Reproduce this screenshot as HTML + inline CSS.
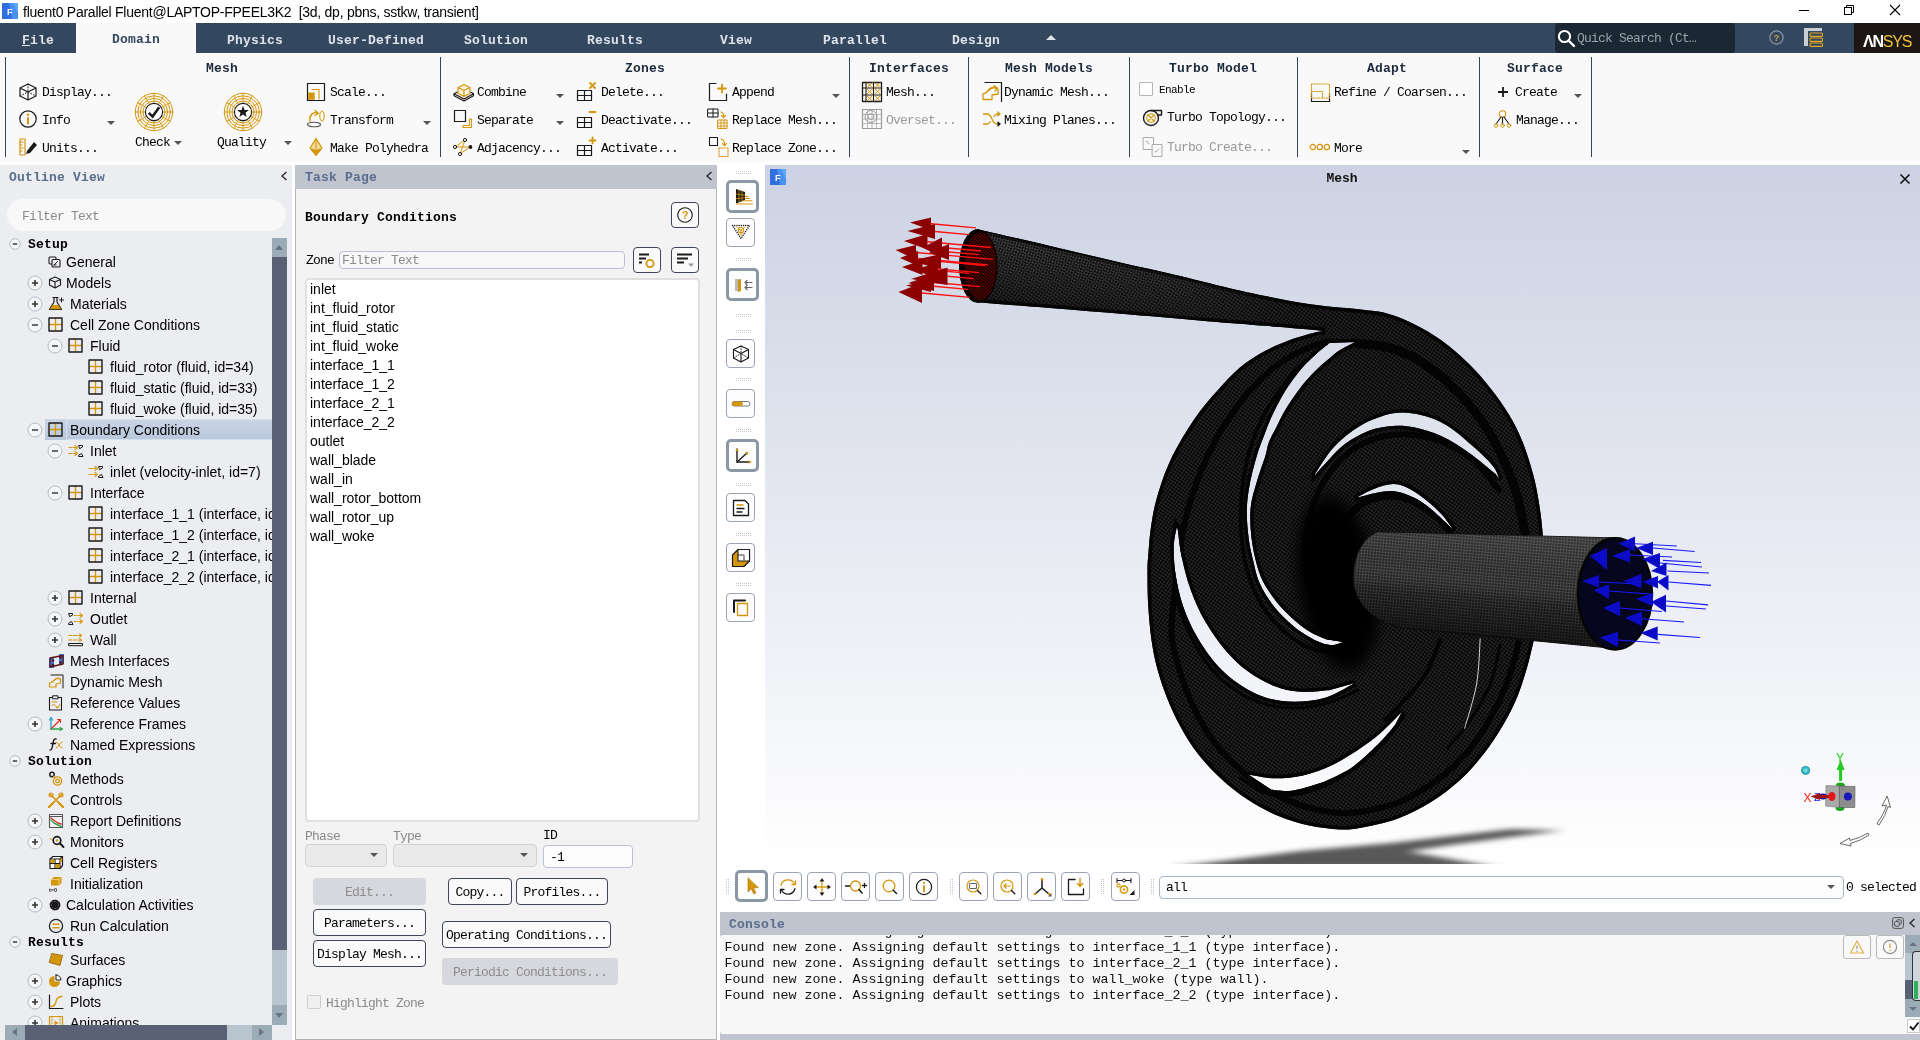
<!DOCTYPE html>
<html lang="en"><head><meta charset="utf-8"><title>fluent0 Parallel Fluent</title>
<style>
*{box-sizing:border-box;margin:0;padding:0}
html,body{width:1920px;height:1040px;overflow:hidden;background:#fff}
body{position:relative;font-family:"Liberation Mono",monospace;font-size:13px;color:#000}
.abs{position:absolute}
.mono{font-family:"Liberation Mono",monospace;font-size:13px;letter-spacing:-0.8px;white-space:pre}
.monob{font-family:"Liberation Mono",monospace;font-size:13px;font-weight:bold;letter-spacing:0.2px;white-space:pre}
.sans{font-family:"Liberation Sans",sans-serif;font-size:14px;white-space:pre}
#title{left:0;top:0;width:1920px;height:23px;background:#fff}
#title .t{left:23px;top:4px;font-family:"Liberation Sans",sans-serif;font-size:14px;letter-spacing:-0.26px;white-space:pre;line-height:17px;color:#000}
#menu{left:0;top:23px;width:1920px;height:30px;background:#33475f}
#menu .tab{position:absolute;top:0;height:30px;line-height:32px;text-align:center;color:#dfe3ea;font-family:"Liberation Mono",monospace;font-weight:bold;font-size:13px;letter-spacing:0.2px;white-space:pre;transform:translateX(-50%)}
#ribbon{left:0;top:53px;width:1920px;height:109px;background:#f9f9f9}
.vsep{position:absolute;top:4px;width:1px;height:100px;background:#34465a}
.glabel{position:absolute;top:8px;height:16px;line-height:16px;transform:translateX(-50%);color:#1b2a3a}
.ri{position:absolute;height:20px;line-height:20px}
.ri svg{position:absolute;left:0;top:0}
.ri span{position:absolute;top:0;white-space:pre}
.dd{position:absolute;width:0;height:0;border-left:4px solid transparent;border-right:4px solid transparent;border-top:4px solid #555}
.dis{color:#999}
</style></head><body>

<div id="title" class="abs">
<svg class="abs" style="left:2px;top:3px" width="16" height="16" viewBox="0 0 16 16"><rect width="16" height="16" fill="#2f6fe0"/><path d="M7 0 L12 0 L16 12 L16 16 L10 16 Z" fill="#4a90f0"/><path d="M11 0H16V11Z" fill="#5aa8ff"/><text x="5" y="12" font-family="Liberation Sans,sans-serif" font-weight="bold" font-size="9" fill="#fff">F</text></svg>
<div class="abs t">fluent0 Parallel Fluent@LAPTOP-FPEEL3K2  [3d, dp, pbns, sstkw, transient]</div>
<svg class="abs" style="left:1790px;top:0" width="130" height="23" viewBox="0 0 130 23" fill="none" stroke="#000" stroke-width="1"><path d="M9 10.5H19"/><rect x="54.5" y="7.5" width="7" height="7"/><path d="M56.5 7.5V5.5H63.5V12.5H61.5"/><path d="M100 5L110 15M110 5L100 15" stroke-width="1.1"/></svg>
</div>
<div id="menu" class="abs">
<div class="abs" style="left:76px;top:0;width:120px;height:30px;background:#f9f9f9"></div>
<div class="tab" style="left:38px;top:2px"><u>F</u>ile</div>
<div class="tab" style="left:136px;top:1px;color:#33475f">Domain</div>
<div class="tab" style="left:255px;top:2px">Physics</div>
<div class="tab" style="left:376px;top:2px">User-Defined</div>
<div class="tab" style="left:496px;top:2px">Solution</div>
<div class="tab" style="left:615px;top:2px">Results</div>
<div class="tab" style="left:736px;top:2px">View</div>
<div class="tab" style="left:855px;top:2px">Parallel</div>
<div class="tab" style="left:976px;top:2px">Design</div>
<div class="abs" style="left:1046px;top:12px;width:0;height:0;border-left:5px solid transparent;border-right:5px solid transparent;border-bottom:5px solid #dfe3ea"></div>
<div class="abs" style="left:1555px;top:0;width:180px;height:30px;background:#1b2733;border-radius:4px"></div>
<svg class="abs" style="left:1556px;top:5px" width="20" height="20" viewBox="0 0 20 20" fill="none"><circle cx="8.5" cy="8.5" r="5.6" stroke="#fff" stroke-width="2"/><path d="M12.5 12.5L18 18" stroke="#fff" stroke-width="2.4" stroke-linecap="round"/></svg>
<div class="abs mono" style="left:1577px;top:8px;color:#9aa3ad;line-height:16px">Quick Search (Ct…</div>
<svg class="abs" style="left:1768px;top:6px" width="17" height="17" viewBox="0 0 17 17" fill="none"><circle cx="8.5" cy="8.5" r="6.6" stroke="#8e99a6" stroke-width="1.2"/><text x="8.5" y="12" text-anchor="middle" font-family="Liberation Sans,sans-serif" font-weight="bold" font-size="9.5" fill="#c9a24a">?</text></svg>
<svg class="abs" style="left:1803px;top:4px" width="21" height="21" viewBox="0 0 21 21" fill="none"><rect x="1" y="1" width="18" height="3" fill="#c9ced6"/><rect x="1" y="4" width="4" height="15" fill="#c9ced6"/><rect x="7" y="6" width="12.5" height="3.4" rx="1" stroke="#e1a722" stroke-width="1.1"/><rect x="7" y="11" width="12.5" height="3.4" rx="1" stroke="#e1a722" stroke-width="1.1"/><rect x="7" y="16" width="12.5" height="3.4" rx="1" stroke="#e1a722" stroke-width="1.1"/></svg>
<div class="abs" style="left:1854px;top:0;width:66px;height:30px;background:#1c1715"></div>
<div class="abs" style="left:1863px;top:10px;font-family:'Liberation Sans',sans-serif;font-weight:bold;font-size:16px;line-height:18px;letter-spacing:-1.2px;color:#fff;white-space:pre">ΛN<span style="color:#f0c23a;font-weight:normal">SYS</span></div>
</div>
<div id="ribbon" class="abs">
<div class="vsep" style="left:5px"></div>
<div class="vsep" style="left:440px"></div>
<div class="vsep" style="left:849px"></div>
<div class="vsep" style="left:968px"></div>
<div class="vsep" style="left:1129px"></div>
<div class="vsep" style="left:1297px"></div>
<div class="vsep" style="left:1479px"></div>
<div class="vsep" style="left:1591px"></div>
<div class="glabel monob" style="left:222px">Mesh</div>
<div class="glabel monob" style="left:645px">Zones</div>
<div class="glabel monob" style="left:909px">Interfaces</div>
<div class="glabel monob" style="left:1049px">Mesh Models</div>
<div class="glabel monob" style="left:1213px">Turbo Model</div>
<div class="glabel monob" style="left:1387px">Adapt</div>
<div class="glabel monob" style="left:1535px">Surface</div>
<div class="ri mono " style="left:0;top:29px;width:0"><div class="abs" style="left:18px;top:0.0px;width:20px;height:20px"><svg width="20" height="20" viewBox="0 0 20 20" fill="none" stroke-linecap="round" stroke-linejoin="round"><path d="M10 2 L18 6 L18 14 L10 18 L2 14 L2 6 Z M2 6 L10 10 L18 6 M10 10 L10 18" stroke="#1a1a1a" stroke-width="1.2"/><path d="M10 2V10M2 14L10 10L18 14" stroke="#1a1a1a" stroke-width="1" stroke-dasharray="1 2"/></svg></div><span style="left:42px;top:1px">Display...</span></div>
<div class="ri mono " style="left:0;top:56px;width:0"><div class="abs" style="left:18px;top:0.0px;width:20px;height:20px"><svg width="20" height="20" viewBox="0 0 20 20" fill="none" stroke-linecap="round" stroke-linejoin="round"><circle cx="10" cy="10" r="8.2" stroke="#1a1a1a" stroke-width="1.2"/><path d="M10 9V14.5" stroke="#d4960a" stroke-width="2"/><circle cx="10" cy="5.8" r="1.2" fill="#d4960a"/></svg></div><span style="left:42px;top:2px">Info</span></div>
<div class="dd" style="left:107px;top:68px"></div>
<div class="ri mono " style="left:0;top:84px;width:0"><div class="abs" style="left:18px;top:0.0px;width:20px;height:20px"><svg width="20" height="20" viewBox="0 0 20 20" fill="none" stroke-linecap="round" stroke-linejoin="round"><rect x="2" y="2" width="5" height="16" stroke="#d4960a" stroke-width="1.2"/><path d="M2 5H5M2 8H4M2 11H5M2 14H4" stroke="#d4960a" stroke-width="1"/><path d="M9 14 L16 5 L19 8 L12 16 L8 17 Z" fill="#1a1a1a"/></svg></div><span style="left:42px;top:2px">Units...</span></div>
<div class="abs" style="left:134px;top:39px;width:40px;height:40px"><svg width="40" height="40" viewBox="0 0 40 40" fill="none" stroke-linecap="round" stroke-linejoin="round"><circle cx="20" cy="20" r="11" stroke="#d4960a" stroke-width="1"/><circle cx="20" cy="20" r="13.6" stroke="#d4960a" stroke-width="1"/><circle cx="20" cy="20" r="16.2" stroke="#d4960a" stroke-width="1"/><circle cx="20" cy="20" r="18.7" stroke="#d4960a" stroke-width="1"/><path d="M28.6 20.0L38.7 20.0" stroke="#d4960a" stroke-width="0.9"/><path d="M27.4 24.3L36.2 29.3" stroke="#d4960a" stroke-width="0.9"/><path d="M24.3 27.4L29.4 36.2" stroke="#d4960a" stroke-width="0.9"/><path d="M20.0 28.6L20.0 38.7" stroke="#d4960a" stroke-width="0.9"/><path d="M15.7 27.4L10.7 36.2" stroke="#d4960a" stroke-width="0.9"/><path d="M12.6 24.3L3.8 29.3" stroke="#d4960a" stroke-width="0.9"/><path d="M11.4 20.0L1.3 20.0" stroke="#d4960a" stroke-width="0.9"/><path d="M12.6 15.7L3.8 10.7" stroke="#d4960a" stroke-width="0.9"/><path d="M15.7 12.6L10.6 3.8" stroke="#d4960a" stroke-width="0.9"/><path d="M20.0 11.4L20.0 1.3" stroke="#d4960a" stroke-width="0.9"/><path d="M24.3 12.6L29.4 3.8" stroke="#d4960a" stroke-width="0.9"/><path d="M27.4 15.7L36.2 10.6" stroke="#d4960a" stroke-width="0.9"/><circle cx="20" cy="20" r="8.6" fill="#fff" stroke="#1a1a1a" stroke-width="1.1"/><path d="M14.8 20.8 L18.6 24.6 L25.2 15.2" stroke="#1a1a1a" stroke-width="2.6" stroke-linecap="butt" stroke-linejoin="miter"/></svg></div>
<div class="abs mono" style="left:135px;top:82px;line-height:16px">Check</div>
<div class="dd" style="left:174px;top:88px"></div>
<div class="abs" style="left:223px;top:39px;width:40px;height:40px"><svg width="40" height="40" viewBox="0 0 40 40" fill="none" stroke-linecap="round" stroke-linejoin="round"><circle cx="20" cy="20" r="11" stroke="#d4960a" stroke-width="1"/><circle cx="20" cy="20" r="13.6" stroke="#d4960a" stroke-width="1"/><circle cx="20" cy="20" r="16.2" stroke="#d4960a" stroke-width="1"/><circle cx="20" cy="20" r="18.7" stroke="#d4960a" stroke-width="1"/><path d="M28.6 20.0L38.7 20.0" stroke="#d4960a" stroke-width="0.9"/><path d="M27.4 24.3L36.2 29.3" stroke="#d4960a" stroke-width="0.9"/><path d="M24.3 27.4L29.4 36.2" stroke="#d4960a" stroke-width="0.9"/><path d="M20.0 28.6L20.0 38.7" stroke="#d4960a" stroke-width="0.9"/><path d="M15.7 27.4L10.7 36.2" stroke="#d4960a" stroke-width="0.9"/><path d="M12.6 24.3L3.8 29.3" stroke="#d4960a" stroke-width="0.9"/><path d="M11.4 20.0L1.3 20.0" stroke="#d4960a" stroke-width="0.9"/><path d="M12.6 15.7L3.8 10.7" stroke="#d4960a" stroke-width="0.9"/><path d="M15.7 12.6L10.6 3.8" stroke="#d4960a" stroke-width="0.9"/><path d="M20.0 11.4L20.0 1.3" stroke="#d4960a" stroke-width="0.9"/><path d="M24.3 12.6L29.4 3.8" stroke="#d4960a" stroke-width="0.9"/><path d="M27.4 15.7L36.2 10.6" stroke="#d4960a" stroke-width="0.9"/><circle cx="20" cy="20" r="8.6" fill="#fff" stroke="#1a1a1a" stroke-width="1.1"/><polygon points="20.0,13.8 21.5,17.9 25.9,18.1 22.5,20.8 23.6,25.0 20.0,22.6 16.4,25.0 17.5,20.8 14.1,18.1 18.5,17.9" fill="#1a1a1a"/></svg></div>
<div class="abs mono" style="left:217px;top:82px;line-height:16px">Quality</div>
<div class="dd" style="left:284px;top:88px"></div>
<div class="ri mono " style="left:0;top:29px;width:0"><div class="abs" style="left:306px;top:0.0px;width:20px;height:20px"><svg width="20" height="20" viewBox="0 0 20 20" fill="none" stroke-linecap="round" stroke-linejoin="round"><rect x="1.5" y="1.5" width="17" height="17" stroke="#1a1a1a" stroke-width="1.2"/><path d="M6 7.5H13V17" stroke="#d4960a" stroke-width="1.1"/><rect x="2.2" y="10.5" width="6.5" height="7.3" fill="#d4960a"/></svg></div><span style="left:330px;top:1px">Scale...</span></div>
<div class="ri mono " style="left:0;top:56px;width:0"><div class="abs" style="left:306px;top:0.0px;width:20px;height:20px"><svg width="20" height="20" viewBox="0 0 20 20" fill="none" stroke-linecap="round" stroke-linejoin="round"><ellipse cx="8" cy="15.5" rx="6.5" ry="2.3" stroke="#555" stroke-width="1.1"/><path d="M4 12 C3 6 7 3 11 4" stroke="#d4960a" stroke-width="1.5"/><path d="M9 1.5 L12.5 4.2 L8.7 6.5" stroke="#d4960a" stroke-width="1.3"/><ellipse cx="16" cy="7" rx="2.2" ry="5" stroke="#d4960a" stroke-width="1.1" stroke-dasharray="1.5 1.2"/></svg></div><span style="left:330px;top:2px">Transform</span></div>
<div class="dd" style="left:423px;top:68px"></div>
<div class="ri mono " style="left:0;top:84px;width:0"><div class="abs" style="left:306px;top:0.0px;width:20px;height:20px"><svg width="20" height="20" viewBox="0 0 20 20" fill="none" stroke-linecap="round" stroke-linejoin="round"><path d="M10 1.5 L16 11 L10 18.5 L4 11 Z" stroke="#d4960a" stroke-width="1.2" fill="#f2d79a"/><path d="M4 11 L10 13 L16 11 L10 18.5 Z" fill="#d4960a"/><path d="M10 1.5V13" stroke="#d4960a" stroke-width="1"/></svg></div><span style="left:330px;top:2px">Make Polyhedra</span></div>
<div class="ri mono " style="left:0;top:29px;width:0"><div class="abs" style="left:452px;top:0.0px;width:22px;height:20px"><svg width="22" height="20" viewBox="0 0 22 20" fill="none" stroke-linecap="round" stroke-linejoin="round"><path d="M6 5.5L12 2.5L18 5.5L12 8.5Z M6 5.5V11.5L12 14.5V8.5 M18 5.5V11.5L12 14.5" stroke="#d4960a" stroke-width="1.2" fill="#fbf1d8"/><path d="M5 10.2L2 11.8L12 17L21.5 11.8L19 10.2 M2 11.8V13.8L12 19L21.5 13.8V11.8" stroke="#1a1a1a" stroke-width="1.2"/></svg></div><span style="left:477px;top:1px">Combine</span></div>
<div class="dd" style="left:556px;top:41px"></div>
<div class="ri mono " style="left:0;top:56px;width:0"><div class="abs" style="left:453px;top:0.0px;width:20px;height:20px"><svg width="20" height="20" viewBox="0 0 20 20" fill="none" stroke-linecap="round" stroke-linejoin="round"><rect x="1.5" y="1.5" width="11" height="11" stroke="#1a1a1a" stroke-width="1.2"/><path d="M10 16.5H16.5V10H18.5V18.5H10Z" stroke="#d4960a" stroke-width="1.1"/></svg></div><span style="left:477px;top:2px">Separate</span></div>
<div class="dd" style="left:556px;top:68px"></div>
<div class="ri mono " style="left:0;top:84px;width:0"><div class="abs" style="left:452px;top:0.0px;width:22px;height:20px"><svg width="22" height="20" viewBox="0 0 22 20" fill="none" stroke-linecap="round" stroke-linejoin="round"><path d="M3 10 L18 10 M8 17 L13 3 M8 17 L18 10 M3 10 L13 3" stroke="#d4960a" stroke-width="1"/><circle cx="3" cy="10" r="1.6" stroke="#1a1a1a" fill="#fff"/><circle cx="13" cy="3" r="1.6" stroke="#1a1a1a" fill="#fff"/><circle cx="8" cy="17" r="1.6" stroke="#1a1a1a" fill="#fff"/><circle cx="18.5" cy="10" r="1.9" fill="#1a1a1a"/></svg></div><span style="left:477px;top:2px">Adjacency...</span></div>
<div class="ri mono " style="left:0;top:29px;width:0"><div class="abs" style="left:576px;top:-1.0px;width:22px;height:22px"><svg width="22" height="22" viewBox="0 0 22 22" fill="none" stroke-linecap="round" stroke-linejoin="round"><rect x="1.5" y="9.5" width="14" height="10" stroke="#1a1a1a" stroke-width="1.2"/><path d="M8.5 9.5V19.5M1.5 14.5H15.5" stroke="#1a1a1a" stroke-width="1.2"/><path d="M14 2L19 7M19 2L14 7" stroke="#d4960a" stroke-width="1.8"/></svg></div><span style="left:601px;top:1px">Delete...</span></div>
<div class="ri mono " style="left:0;top:56px;width:0"><div class="abs" style="left:576px;top:-1.0px;width:22px;height:22px"><svg width="22" height="22" viewBox="0 0 22 22" fill="none" stroke-linecap="round" stroke-linejoin="round"><rect x="1.5" y="9.5" width="14" height="10" stroke="#1a1a1a" stroke-width="1.2"/><path d="M8.5 9.5V19.5M1.5 14.5H15.5" stroke="#1a1a1a" stroke-width="1.2"/><path d="M13.5 4H19.5" stroke="#d4960a" stroke-width="1.8"/></svg></div><span style="left:601px;top:2px">Deactivate...</span></div>
<div class="ri mono " style="left:0;top:84px;width:0"><div class="abs" style="left:576px;top:-1.0px;width:22px;height:22px"><svg width="22" height="22" viewBox="0 0 22 22" fill="none" stroke-linecap="round" stroke-linejoin="round"><rect x="1.5" y="9.5" width="14" height="10" stroke="#1a1a1a" stroke-width="1.2"/><path d="M8.5 9.5V19.5M1.5 14.5H15.5" stroke="#1a1a1a" stroke-width="1.2"/><path d="M13.5 4.5H19.5M16.5 1.5V7.5" stroke="#d4960a" stroke-width="1.8"/></svg></div><span style="left:601px;top:2px">Activate...</span></div>
<div class="ri mono " style="left:0;top:29px;width:0"><div class="abs" style="left:708px;top:0.0px;width:22px;height:20px"><svg width="22" height="20" viewBox="0 0 22 20" fill="none" stroke-linecap="round" stroke-linejoin="round"><path d="M8 1.5H1.5V18.5H18.5V12" stroke="#1a1a1a" stroke-width="1.2"/><path d="M10 6.5H18M14 2.5V10.5" stroke="#d4960a" stroke-width="1.8"/></svg></div><span style="left:732px;top:1px">Append</span></div>
<div class="dd" style="left:832px;top:41px"></div>
<div class="ri mono " style="left:0;top:56px;width:0"><div class="abs" style="left:707px;top:-1.0px;width:22px;height:22px"><svg width="22" height="22" viewBox="0 0 22 22" fill="none" stroke-linecap="round" stroke-linejoin="round"><rect x="1" y="1" width="10" height="8" stroke="#1a1a1a" stroke-width="1"/><path d="M6 1V9M1 5H11" stroke="#1a1a1a" stroke-width="1"/><rect x="11" y="12" width="9" height="8.5" stroke="#d4960a" stroke-width="1"/><path d="M14 12V20.5M17 12V20.5M11 15H20M11 18H20" stroke="#d4960a" stroke-width="0.9"/><path d="M14 4 Q17 5 16.5 9 M14.5 7.5L16.5 9.5L18.5 7.5" stroke="#d4960a" stroke-width="1.1"/></svg></div><span style="left:732px;top:2px">Replace Mesh...</span></div>
<div class="ri mono " style="left:0;top:84px;width:0"><div class="abs" style="left:708px;top:-1.0px;width:22px;height:22px"><svg width="22" height="22" viewBox="0 0 22 22" fill="none" stroke-linecap="round" stroke-linejoin="round"><rect x="1.5" y="1.5" width="8" height="8" stroke="#1a1a1a" stroke-width="1.1"/><rect x="11" y="12" width="9" height="8.5" stroke="#d4960a" stroke-width="1.1" stroke-dasharray="1.5 1.3"/><path d="M13 3 Q17 4 16.5 9 M14.5 7.5L16.5 9.5L18.5 7.5" stroke="#d4960a" stroke-width="1.1"/></svg></div><span style="left:732px;top:2px">Replace Zone...</span></div>
<div class="ri mono " style="left:0;top:29px;width:0"><div class="abs" style="left:861px;top:-1.0px;width:22px;height:22px"><svg width="22" height="22" viewBox="0 0 22 22" fill="none" stroke-linecap="round" stroke-linejoin="round"><rect x="1.5" y="1.5" width="19" height="19" stroke="#1a1a1a" stroke-width="1.3"/><path d="M1.5 7H20.5M1.5 14H20.5M5 1.5V20.5M12.5 1.5V20.5" stroke="#1a1a1a" stroke-width="1.1"/><path d="M6.1 8.1L11.299999999999999 12.9M11.299999999999999 8.1L6.1 12.9" stroke="#d4960a" stroke-width="1"/><path d="M13.9 8.1L19.1 12.9M19.1 8.1L13.9 12.9" stroke="#d4960a" stroke-width="1"/><path d="M6.1 14.9L11.299999999999999 19.7M11.299999999999999 14.9L6.1 19.7" stroke="#d4960a" stroke-width="1"/><path d="M13.9 14.9L19.1 19.7M19.1 14.9L13.9 19.7" stroke="#d4960a" stroke-width="1"/><path d="M6.1 1.8000000000000003L11.299999999999999 6.6M11.299999999999999 1.8000000000000003L6.1 6.6" stroke="#d4960a" stroke-width="1"/><path d="M13.9 1.8000000000000003L19.1 6.6M19.1 1.8000000000000003L13.9 6.6" stroke="#d4960a" stroke-width="1"/></svg></div><span style="left:886px;top:1px">Mesh...</span></div>
<div class="ri mono dis" style="left:0;top:56px;width:0"><div class="abs" style="left:861px;top:-1.0px;width:22px;height:22px"><svg width="22" height="22" viewBox="0 0 22 22" fill="none" stroke-linecap="round" stroke-linejoin="round"><rect x="1.5" y="1.5" width="19" height="19" stroke="#999" stroke-width="1.2"/><path d="M1.5 6.5H20.5M1.5 11H20.5M1.5 15.5H20.5M6.5 1.5V20.5M11 1.5V20.5M15.5 1.5V20.5" stroke="#aaa" stroke-width="0.8"/><circle cx="10" cy="8.5" r="6" stroke="#999" stroke-width="1"/><circle cx="10" cy="8.5" r="3" stroke="#999" stroke-width="0.9"/></svg></div><span style="left:886px;top:2px">Overset...</span></div>
<div class="ri mono " style="left:0;top:29px;width:0"><div class="abs" style="left:981px;top:-1.0px;width:22px;height:22px"><svg width="22" height="22" viewBox="0 0 22 22" fill="none" stroke-linecap="round" stroke-linejoin="round"><path d="M4 1.5H20.5V20.5" stroke="#1a1a1a" stroke-width="1.2"/><path d="M2 18.5 L2 13 Q6 12 8 9 Q12 5 17 8 L17 13 L11 14 L11 18.5 Z" stroke="#d4960a" stroke-width="1.3"/><path d="M5 12 Q10 4 16 7 M13 4.5L16.5 7L14 10" stroke="#d4960a" stroke-width="1.2"/></svg></div><span style="left:1004px;top:1px">Dynamic Mesh...</span></div>
<div class="ri mono " style="left:0;top:56px;width:0"><div class="abs" style="left:982px;top:0.0px;width:22px;height:20px"><svg width="22" height="20" viewBox="0 0 22 20" fill="none" stroke-linecap="round" stroke-linejoin="round"><path d="M1.5 5 H5 Q8 5 10 10 Q12 15 15 15 H17 M1.5 15 H5 Q7 15 8.5 12.5 M12 7.5 Q13.5 5 15.5 5 H17" stroke="#d4960a" stroke-width="1.3"/><path d="M15.5 2L19 5L15.5 8Z" fill="#d4960a"/><path d="M15.5 12L19 15L15.5 18Z" fill="#1a1a1a"/></svg></div><span style="left:1004px;top:2px">Mixing Planes...</span></div>
<div class="abs" style="left:1139px;top:29px;width:14px;height:14px;border:1px solid #b5b5b5;background:#fff;border-radius:1px"></div>
<div class="abs" style="left:1159px;top:29px;font-size:11px;letter-spacing:-0.6px;line-height:16px;white-space:pre">Enable</div>
<div class="ri mono " style="left:0;top:54px;width:0"><div class="abs" style="left:1142px;top:-1.0px;width:22px;height:22px"><svg width="22" height="22" viewBox="0 0 22 22" fill="none" stroke-linecap="round" stroke-linejoin="round"><circle cx="9" cy="12" r="7.5" stroke="#1a1a1a" stroke-width="1.4"/><path d="M9 4.5 H19.5 V9 H15.5" stroke="#1a1a1a" stroke-width="1.4"/><circle cx="9" cy="12" r="4.3" stroke="#d4960a" stroke-width="1.1"/><path d="M6 9L12 15M12 9L6 15" stroke="#d4960a" stroke-width="1.1"/></svg></div><span style="left:1167px;top:1px">Turbo Topology...</span></div>
<div class="ri mono dis" style="left:0;top:84px;width:0"><div class="abs" style="left:1142px;top:-1.0px;width:22px;height:22px"><svg width="22" height="22" viewBox="0 0 22 22" fill="none" stroke-linecap="round" stroke-linejoin="round"><rect x="1.5" y="1.5" width="10" height="12" stroke="#aaa" stroke-width="1"/><rect x="10.5" y="8.5" width="9.5" height="12" stroke="#aaa" stroke-width="1" fill="#f9f9f9"/><path d="M4 5 Q6 5 7 8M13 16 Q15 16 17 13" stroke="#aaa" stroke-width="1"/></svg></div><span style="left:1167px;top:1px">Turbo Create...</span></div>
<div class="ri mono " style="left:0;top:29px;width:0"><div class="abs" style="left:1310px;top:-1.0px;width:22px;height:22px"><svg width="22" height="22" viewBox="0 0 22 22" fill="none" stroke-linecap="round" stroke-linejoin="round"><path d="M1.5 13V20.5H19.5V13" stroke="#1a1a1a" stroke-width="1.2"/><rect x="1.5" y="3" width="18" height="14" stroke="#d4960a" stroke-width="1.1" stroke-dasharray="1.2 1.4"/><path d="M1.5 10.5H12.5V17" stroke="#d4960a" stroke-width="1.1" stroke-dasharray="1.2 1.4"/></svg></div><span style="left:1334px;top:1px">Refine / Coarsen...</span></div>
<div class="ri mono " style="left:0;top:84px;width:0"><div class="abs" style="left:1309px;top:5.0px;width:22px;height:10px"><svg width="22" height="10" viewBox="0 0 22 10" fill="none" stroke-linecap="round" stroke-linejoin="round"><circle cx="3.8" cy="5" r="2.6" stroke="#d4960a" stroke-width="1.2"/><circle cx="10.8" cy="5" r="2.6" stroke="#d4960a" stroke-width="1.2"/><circle cx="17.8" cy="5" r="2.6" stroke="#d4960a" stroke-width="1.2"/></svg></div><span style="left:1334px;top:2px">More</span></div>
<div class="dd" style="left:1462px;top:97px"></div>
<div class="ri mono " style="left:0;top:29px;width:0"><div class="abs" style="left:1496px;top:3.0px;width:14px;height:14px"><svg width="14" height="14" viewBox="0 0 14 14" fill="none" stroke-linecap="round" stroke-linejoin="round"><path d="M2 7H12M7 2V12" stroke="#1a1a1a" stroke-width="1.8" stroke-linecap="butt"/></svg></div><span style="left:1515px;top:1px">Create</span></div>
<div class="dd" style="left:1574px;top:41px"></div>
<div class="ri mono " style="left:0;top:56px;width:0"><div class="abs" style="left:1493px;top:0.0px;width:20px;height:20px"><svg width="20" height="20" viewBox="0 0 20 20" fill="none" stroke-linecap="round" stroke-linejoin="round"><circle cx="9.5" cy="5" r="3.2" stroke="#d4960a" stroke-width="1.1"/><path d="M8 8 L3 15 M9.5 8.2V15 M11 8L16 15" stroke="#1a1a1a" stroke-width="1.1"/><circle cx="3" cy="16.5" r="1.8" stroke="#d4960a" stroke-width="1"/><circle cx="9.5" cy="16.5" r="1.8" stroke="#d4960a" stroke-width="1"/><circle cx="16" cy="16.5" r="1.8" stroke="#d4960a" stroke-width="1"/></svg></div><span style="left:1516px;top:2px">Manage...</span></div>
</div>
<div class="abs" style="left:0;top:165px;width:292px;height:875px;background:#ecedf0;overflow:hidden">
<div class="abs monob" style="left:9px;top:5px;line-height:16px;color:#5a6e8c">Outline View</div>
<svg class="abs" style="left:279px;top:5px" width="10" height="12" viewBox="0 0 10 12" fill="none"><path d="M7.5 2L3 6L7.5 10" stroke="#222" stroke-width="1.3"/></svg>
<div class="abs" style="left:7px;top:34px;width:279px;height:32px;border-radius:16px;background:#f8f8f8"></div>
<div class="abs mono" style="left:22px;top:44px;line-height:16px;color:#8a8a8a">Filter Text</div>
<div class="abs" style="left:0;top:0;width:272px;height:860px;overflow:hidden">
<div class="abs" style="left:45px;top:254px;width:227px;height:21px;background:linear-gradient(#cad5e5,#b9c7dc)"></div>
<div class="abs" style="left:66px;top:254px;width:206px;height:21px;border:1px solid #d6dfec;border-right:none"></div>
<svg class="abs" style="left:7px;top:71px" width="16" height="16" viewBox="0 0 16 16"><circle cx="8" cy="8" r="5.3" fill="#f4f5f6" stroke="#b4bbc3" stroke-width="1"/><path d="M5.8 8H10.2" stroke="#4d5258" stroke-width="1.7"/></svg>
<div class="abs monob" style="left:28px;top:72px;line-height:16px">Setup</div>
<div class="abs" style="left:48px;top:90.5px;width:13px;height:12px"><svg width="13" height="12" viewBox="0 0 13 12" fill="none" stroke-linecap="round" stroke-linejoin="round"><rect x="1" y="1" width="7" height="7" rx="1" stroke="#1a1a1a" stroke-width="1.1"/><rect x="4" y="3.5" width="8" height="7.5" rx="1" stroke="#1a1a1a" stroke-width="1.1" fill="#ecedf0"/><path d="M6 9L9.5 5.5M6 9H8" stroke="#1a1a1a" stroke-width="1"/></svg></div>
<div class="abs sans" style="left:66px;top:88px;line-height:18px">General</div>
<svg class="abs" style="left:27px;top:110px" width="16" height="16" viewBox="0 0 16 16"><circle cx="8" cy="8" r="7" fill="#f4f5f6" stroke="#b4bbc3" stroke-width="1"/><path d="M5 8H11M8 5V11" stroke="#333" stroke-width="1.6"/></svg>
<div class="abs" style="left:48px;top:111.0px;width:14px;height:13px"><svg width="14" height="13" viewBox="0 0 14 13" fill="none" stroke-linecap="round" stroke-linejoin="round"><path d="M7 1L12.5 3.5V9L7 12L1.5 9V3.5Z M1.5 3.5L7 6L12.5 3.5M7 6V12" stroke="#1a1a1a" stroke-width="1.1"/></svg></div>
<div class="abs sans" style="left:66px;top:109px;line-height:18px">Models</div>
<svg class="abs" style="left:27px;top:131px" width="16" height="16" viewBox="0 0 16 16"><circle cx="8" cy="8" r="7" fill="#f4f5f6" stroke="#b4bbc3" stroke-width="1"/><path d="M5 8H11M8 5V11" stroke="#333" stroke-width="1.6"/></svg>
<div class="abs" style="left:48px;top:131.0px;width:17px;height:15px"><svg width="17" height="15" viewBox="0 0 17 15" fill="none" stroke-linecap="round" stroke-linejoin="round"><path d="M5 1.5H10M6 1.5V6L1.5 13.5H13.5L9 6V1.5" stroke="#1a1a1a" stroke-width="1.2"/><path d="M4.6 9H10.4L13 13.2H2Z" fill="#d4960a"/><path d="M13.5 2V6M11.5 4H15.5" stroke="#1a1a1a" stroke-width="1"/></svg></div>
<div class="abs sans" style="left:70px;top:130px;line-height:18px">Materials</div>
<svg class="abs" style="left:27px;top:152px" width="16" height="16" viewBox="0 0 16 16"><circle cx="8" cy="8" r="7" fill="#f4f5f6" stroke="#b4bbc3" stroke-width="1"/><path d="M5 8H11" stroke="#4d5258" stroke-width="1.7"/></svg>
<div class="abs" style="left:48px;top:152.0px;width:15px;height:15px"><svg width="15" height="15" viewBox="0 0 15 15" fill="none" stroke-linecap="round" stroke-linejoin="round"><path d="M7.5 1.5V13.5M1.5 7.5H13.5" stroke="#d4960a" stroke-width="1.3"/><rect x="1" y="1" width="13" height="13" stroke="#1a1a1a" stroke-width="1.4"/></svg></div>
<div class="abs sans" style="left:70px;top:151px;line-height:18px">Cell Zone Conditions</div>
<svg class="abs" style="left:47px;top:173px" width="16" height="16" viewBox="0 0 16 16"><circle cx="8" cy="8" r="7" fill="#f4f5f6" stroke="#b4bbc3" stroke-width="1"/><path d="M5 8H11" stroke="#4d5258" stroke-width="1.7"/></svg>
<div class="abs" style="left:68px;top:173.0px;width:15px;height:15px"><svg width="15" height="15" viewBox="0 0 15 15" fill="none" stroke-linecap="round" stroke-linejoin="round"><path d="M7.5 1.5V13.5M1.5 7.5H13.5" stroke="#d4960a" stroke-width="1.3"/><rect x="1" y="1" width="13" height="13" stroke="#1a1a1a" stroke-width="1.4"/></svg></div>
<div class="abs sans" style="left:90px;top:172px;line-height:18px">Fluid</div>
<div class="abs" style="left:88px;top:194.0px;width:15px;height:15px"><svg width="15" height="15" viewBox="0 0 15 15" fill="none" stroke-linecap="round" stroke-linejoin="round"><path d="M7.5 1.5V13.5M1.5 7.5H13.5" stroke="#d4960a" stroke-width="1.3"/><rect x="1" y="1" width="13" height="13" stroke="#1a1a1a" stroke-width="1.4"/></svg></div>
<div class="abs sans" style="left:110px;top:193px;line-height:18px">fluid_rotor (fluid, id=34)</div>
<div class="abs" style="left:88px;top:215.0px;width:15px;height:15px"><svg width="15" height="15" viewBox="0 0 15 15" fill="none" stroke-linecap="round" stroke-linejoin="round"><path d="M7.5 1.5V13.5M1.5 7.5H13.5" stroke="#d4960a" stroke-width="1.3"/><rect x="1" y="1" width="13" height="13" stroke="#1a1a1a" stroke-width="1.4"/></svg></div>
<div class="abs sans" style="left:110px;top:214px;line-height:18px">fluid_static (fluid, id=33)</div>
<div class="abs" style="left:88px;top:236.0px;width:15px;height:15px"><svg width="15" height="15" viewBox="0 0 15 15" fill="none" stroke-linecap="round" stroke-linejoin="round"><path d="M7.5 1.5V13.5M1.5 7.5H13.5" stroke="#d4960a" stroke-width="1.3"/><rect x="1" y="1" width="13" height="13" stroke="#1a1a1a" stroke-width="1.4"/></svg></div>
<div class="abs sans" style="left:110px;top:235px;line-height:18px">fluid_woke (fluid, id=35)</div>
<svg class="abs" style="left:27px;top:257px" width="16" height="16" viewBox="0 0 16 16"><circle cx="8" cy="8" r="7" fill="#f4f5f6" stroke="#b4bbc3" stroke-width="1"/><path d="M5 8H11" stroke="#4d5258" stroke-width="1.7"/></svg>
<div class="abs" style="left:48px;top:257.0px;width:15px;height:15px"><svg width="15" height="15" viewBox="0 0 15 15" fill="none" stroke-linecap="round" stroke-linejoin="round"><path d="M7.5 1.5V13.5M1.5 7.5H13.5" stroke="#d4960a" stroke-width="1.3"/><rect x="1" y="1" width="13" height="13" stroke="#1a1a1a" stroke-width="1.4"/></svg></div>
<div class="abs sans" style="left:70px;top:256px;line-height:18px">Boundary Conditions</div>
<svg class="abs" style="left:47px;top:278px" width="16" height="16" viewBox="0 0 16 16"><circle cx="8" cy="8" r="7" fill="#f4f5f6" stroke="#b4bbc3" stroke-width="1"/><path d="M5 8H11" stroke="#4d5258" stroke-width="1.7"/></svg>
<div class="abs" style="left:68px;top:278.5px;width:16px;height:14px"><svg width="16" height="14" viewBox="0 0 16 14" fill="none" stroke-linecap="round" stroke-linejoin="round"><path d="M1 3.5H9M1 9.5H9" stroke="#d4960a" stroke-width="1.2" stroke-dasharray="2.5 1.5"/><path d="M7 1.5L9.5 3.5L7 5.5M7 7.5L9.5 9.5L7 11.5" stroke="#d4960a" stroke-width="1.1"/><path d="M11 1.5H14.5V3L12 4.5Z M11 11L13.5 9.5L15 12.5H11Z" stroke="#1a1a1a" stroke-width="1"/></svg></div>
<div class="abs sans" style="left:90px;top:277px;line-height:18px">Inlet</div>
<div class="abs" style="left:88px;top:299.5px;width:16px;height:14px"><svg width="16" height="14" viewBox="0 0 16 14" fill="none" stroke-linecap="round" stroke-linejoin="round"><path d="M1 3.5H9M1 9.5H9" stroke="#d4960a" stroke-width="1.2" stroke-dasharray="2.5 1.5"/><path d="M7 1.5L9.5 3.5L7 5.5M7 7.5L9.5 9.5L7 11.5" stroke="#d4960a" stroke-width="1.1"/><path d="M11 1.5H14.5V3L12 4.5Z M11 11L13.5 9.5L15 12.5H11Z" stroke="#1a1a1a" stroke-width="1"/></svg></div>
<div class="abs sans" style="left:110px;top:298px;line-height:18px">inlet (velocity-inlet, id=7)</div>
<svg class="abs" style="left:47px;top:320px" width="16" height="16" viewBox="0 0 16 16"><circle cx="8" cy="8" r="7" fill="#f4f5f6" stroke="#b4bbc3" stroke-width="1"/><path d="M5 8H11" stroke="#4d5258" stroke-width="1.7"/></svg>
<div class="abs" style="left:68px;top:320.0px;width:15px;height:15px"><svg width="15" height="15" viewBox="0 0 15 15" fill="none" stroke-linecap="round" stroke-linejoin="round"><path d="M7.5 1.5V13.5M1.5 7.5H13.5" stroke="#d4960a" stroke-width="1.3"/><rect x="1" y="1" width="13" height="13" stroke="#1a1a1a" stroke-width="1.4"/></svg></div>
<div class="abs sans" style="left:90px;top:319px;line-height:18px">Interface</div>
<div class="abs" style="left:88px;top:341.0px;width:15px;height:15px"><svg width="15" height="15" viewBox="0 0 15 15" fill="none" stroke-linecap="round" stroke-linejoin="round"><path d="M7.5 1.5V13.5M1.5 7.5H13.5" stroke="#d4960a" stroke-width="1.3"/><rect x="1" y="1" width="13" height="13" stroke="#1a1a1a" stroke-width="1.4"/></svg></div>
<div class="abs sans" style="left:110px;top:340px;line-height:18px">interface_1_1 (interface, id=2)</div>
<div class="abs" style="left:88px;top:362.0px;width:15px;height:15px"><svg width="15" height="15" viewBox="0 0 15 15" fill="none" stroke-linecap="round" stroke-linejoin="round"><path d="M7.5 1.5V13.5M1.5 7.5H13.5" stroke="#d4960a" stroke-width="1.3"/><rect x="1" y="1" width="13" height="13" stroke="#1a1a1a" stroke-width="1.4"/></svg></div>
<div class="abs sans" style="left:110px;top:361px;line-height:18px">interface_1_2 (interface, id=3)</div>
<div class="abs" style="left:88px;top:383.0px;width:15px;height:15px"><svg width="15" height="15" viewBox="0 0 15 15" fill="none" stroke-linecap="round" stroke-linejoin="round"><path d="M7.5 1.5V13.5M1.5 7.5H13.5" stroke="#d4960a" stroke-width="1.3"/><rect x="1" y="1" width="13" height="13" stroke="#1a1a1a" stroke-width="1.4"/></svg></div>
<div class="abs sans" style="left:110px;top:382px;line-height:18px">interface_2_1 (interface, id=4)</div>
<div class="abs" style="left:88px;top:404.0px;width:15px;height:15px"><svg width="15" height="15" viewBox="0 0 15 15" fill="none" stroke-linecap="round" stroke-linejoin="round"><path d="M7.5 1.5V13.5M1.5 7.5H13.5" stroke="#d4960a" stroke-width="1.3"/><rect x="1" y="1" width="13" height="13" stroke="#1a1a1a" stroke-width="1.4"/></svg></div>
<div class="abs sans" style="left:110px;top:403px;line-height:18px">interface_2_2 (interface, id=5)</div>
<svg class="abs" style="left:47px;top:425px" width="16" height="16" viewBox="0 0 16 16"><circle cx="8" cy="8" r="7" fill="#f4f5f6" stroke="#b4bbc3" stroke-width="1"/><path d="M5 8H11M8 5V11" stroke="#333" stroke-width="1.6"/></svg>
<div class="abs" style="left:68px;top:425.0px;width:15px;height:15px"><svg width="15" height="15" viewBox="0 0 15 15" fill="none" stroke-linecap="round" stroke-linejoin="round"><path d="M7.5 1.5V13.5M1.5 7.5H13.5" stroke="#d4960a" stroke-width="1.3"/><rect x="1" y="1" width="13" height="13" stroke="#1a1a1a" stroke-width="1.4"/></svg></div>
<div class="abs sans" style="left:90px;top:424px;line-height:18px">Internal</div>
<svg class="abs" style="left:47px;top:446px" width="16" height="16" viewBox="0 0 16 16"><circle cx="8" cy="8" r="7" fill="#f4f5f6" stroke="#b4bbc3" stroke-width="1"/><path d="M5 8H11M8 5V11" stroke="#333" stroke-width="1.6"/></svg>
<div class="abs" style="left:68px;top:446.5px;width:16px;height:14px"><svg width="16" height="14" viewBox="0 0 16 14" fill="none" stroke-linecap="round" stroke-linejoin="round"><path d="M6 3.5H14M6 9.5H14" stroke="#d4960a" stroke-width="1.2" stroke-dasharray="2.5 1.5"/><path d="M12 1.5L14.5 3.5L12 5.5M12 7.5L14.5 9.5L12 11.5" stroke="#d4960a" stroke-width="1.1"/><path d="M1 1.5H4.5V3L2 4.5Z M1 11L3.5 9.5L5 12.5H1Z" stroke="#1a1a1a" stroke-width="1"/></svg></div>
<div class="abs sans" style="left:90px;top:445px;line-height:18px">Outlet</div>
<svg class="abs" style="left:47px;top:467px" width="16" height="16" viewBox="0 0 16 16"><circle cx="8" cy="8" r="7" fill="#f4f5f6" stroke="#b4bbc3" stroke-width="1"/><path d="M5 8H11M8 5V11" stroke="#333" stroke-width="1.6"/></svg>
<div class="abs" style="left:68px;top:467.5px;width:16px;height:14px"><svg width="16" height="14" viewBox="0 0 16 14" fill="none" stroke-linecap="round" stroke-linejoin="round"><path d="M1 2.5H13M1 7H13" stroke="#d4960a" stroke-width="1.2" stroke-dasharray="3 1.5"/><path d="M11.5 0.8L14 2.5L11.5 4.2M11.5 5.3L14 7L11.5 8.7" stroke="#d4960a" stroke-width="1"/><rect x="1" y="10.5" width="13.5" height="2.2" stroke="#1a1a1a" stroke-width="1"/></svg></div>
<div class="abs sans" style="left:90px;top:466px;line-height:18px">Wall</div>
<div class="abs" style="left:48px;top:487.5px;width:17px;height:16px"><svg width="17" height="16" viewBox="0 0 17 16" fill="none" stroke-linecap="round" stroke-linejoin="round"><rect x="1" y="5" width="5" height="10" fill="#3b78d8"/><rect x="11" y="1" width="5" height="10" fill="#3b78d8"/><path d="M2 5L15 2.5V11L2 14Z" stroke="#5a1010" stroke-width="1.3"/><circle cx="5" cy="7.5" r="1.3" fill="#5a1010"/><circle cx="12.5" cy="4.5" r="1.3" fill="#5a1010"/><circle cx="5" cy="12" r="1.3" fill="#5a1010"/><circle cx="12.5" cy="9.5" r="1.3" fill="#5a1010"/></svg></div>
<div class="abs sans" style="left:70px;top:487px;line-height:18px">Mesh Interfaces</div>
<div class="abs" style="left:48px;top:509.0px;width:16px;height:15px"><svg width="16" height="15" viewBox="0 0 16 15" fill="none" stroke-linecap="round" stroke-linejoin="round"><path d="M3 1H15V14" stroke="#1a1a1a" stroke-width="1"/><path d="M1.5 13V9Q5 8 6.5 6Q9 3 12.5 5V9L8 10V13Z" stroke="#d4960a" stroke-width="1.2"/><path d="M4 8Q8 3 12 5" stroke="#d4960a" stroke-width="1"/></svg></div>
<div class="abs sans" style="left:70px;top:508px;line-height:18px">Dynamic Mesh</div>
<div class="abs" style="left:48px;top:529.5px;width:15px;height:16px"><svg width="15" height="16" viewBox="0 0 15 16" fill="none" stroke-linecap="round" stroke-linejoin="round"><rect x="1.5" y="2.5" width="12" height="12.5" stroke="#1a1a1a" stroke-width="1.1"/><rect x="5" y="0.8" width="5" height="3" fill="#ecedf0" stroke="#1a1a1a" stroke-width="1"/><path d="M4 7H9M4 10H7" stroke="#d4960a" stroke-width="1.2"/><path d="M8 11.5L9.5 13L12 9.5" stroke="#d4960a" stroke-width="1.1"/></svg></div>
<div class="abs sans" style="left:70px;top:529px;line-height:18px">Reference Values</div>
<svg class="abs" style="left:27px;top:551px" width="16" height="16" viewBox="0 0 16 16"><circle cx="8" cy="8" r="7" fill="#f4f5f6" stroke="#b4bbc3" stroke-width="1"/><path d="M5 8H11M8 5V11" stroke="#333" stroke-width="1.6"/></svg>
<div class="abs" style="left:48px;top:551.0px;width:16px;height:15px"><svg width="16" height="15" viewBox="0 0 16 15" fill="none" stroke-linecap="round" stroke-linejoin="round"><path d="M3 13V2" stroke="#1f9bd1" stroke-width="1.3"/><path d="M1.5 4L3 1.5L4.5 4" stroke="#1f9bd1" stroke-width="1.1"/><path d="M3 13L12 4" stroke="#d93025" stroke-width="1.3"/><path d="M9.5 3.5H12.5V6.5" stroke="#d93025" stroke-width="1.1"/><path d="M3 13H14" stroke="#2da44e" stroke-width="1.3"/><path d="M12 11.5L14.5 13L12 14.5" stroke="#2da44e" stroke-width="1.1"/></svg></div>
<div class="abs sans" style="left:70px;top:550px;line-height:18px">Reference Frames</div>
<div class="abs" style="left:48px;top:572.0px;width:16px;height:15px"><svg width="16" height="15" viewBox="0 0 16 15" fill="none" stroke-linecap="round" stroke-linejoin="round"><path d="M2 13Q4 13 4.5 9L5.5 4Q6 1.5 8 2M3 6.5H7.5" stroke="#1a1a1a" stroke-width="1.4"/><path d="M8 5Q9.5 5 11 8T14 11M14 5Q12.5 5 11 8T8 11" stroke="#d4960a" stroke-width="1"/></svg></div>
<div class="abs sans" style="left:70px;top:571px;line-height:18px">Named Expressions</div>
<svg class="abs" style="left:7px;top:588px" width="16" height="16" viewBox="0 0 16 16"><circle cx="8" cy="8" r="5.3" fill="#f4f5f6" stroke="#b4bbc3" stroke-width="1"/><path d="M5.8 8H10.2" stroke="#4d5258" stroke-width="1.7"/></svg>
<div class="abs monob" style="left:28px;top:589px;line-height:16px">Solution</div>
<div class="abs" style="left:48px;top:605.5px;width:16px;height:16px"><svg width="16" height="16" viewBox="0 0 16 16" fill="none" stroke-linecap="round" stroke-linejoin="round"><circle cx="4" cy="3.5" r="2.2" stroke="#1a1a1a" stroke-width="1.5"/><circle cx="9.5" cy="10" r="4.2" stroke="#d4960a" stroke-width="1.3" stroke-dasharray="2 1"/><circle cx="9.5" cy="10" r="1.8" stroke="#d4960a" stroke-width="1.3"/><path d="M5.5 5.2L7 7" stroke="#d4960a" stroke-width="1.2"/></svg></div>
<div class="abs sans" style="left:70px;top:605px;line-height:18px">Methods</div>
<div class="abs" style="left:48px;top:626.5px;width:16px;height:16px"><svg width="16" height="16" viewBox="0 0 16 16" fill="none" stroke-linecap="round" stroke-linejoin="round"><path d="M2 2L14 14M14 2L2 14" stroke="#d4960a" stroke-width="1.6"/><circle cx="3" cy="3" r="2" stroke="#d4960a" stroke-width="1.2"/><circle cx="13" cy="3" r="2" stroke="#d4960a" stroke-width="1.2"/><path d="M1 15L5 11M11 11L15 15" stroke="#d4960a" stroke-width="2.4"/></svg></div>
<div class="abs sans" style="left:70px;top:626px;line-height:18px">Controls</div>
<svg class="abs" style="left:27px;top:648px" width="16" height="16" viewBox="0 0 16 16"><circle cx="8" cy="8" r="7" fill="#f4f5f6" stroke="#b4bbc3" stroke-width="1"/><path d="M5 8H11M8 5V11" stroke="#333" stroke-width="1.6"/></svg>
<div class="abs" style="left:48px;top:647.5px;width:16px;height:16px"><svg width="16" height="16" viewBox="0 0 16 16" fill="none" stroke-linecap="round" stroke-linejoin="round"><rect x="1.5" y="1.5" width="13" height="13" stroke="#555" stroke-width="1.1" fill="#f7f2f4"/><path d="M1.5 3.5H14.5" stroke="#555" stroke-width="1"/><path d="M3 5L7 8L10 10L13 11" stroke="#d93025" stroke-width="1.4"/><path d="M3 7L6 10L10 12L13 13.5" stroke="#2da44e" stroke-width="1.4"/></svg></div>
<div class="abs sans" style="left:70px;top:647px;line-height:18px">Report Definitions</div>
<svg class="abs" style="left:27px;top:669px" width="16" height="16" viewBox="0 0 16 16"><circle cx="8" cy="8" r="7" fill="#f4f5f6" stroke="#b4bbc3" stroke-width="1"/><path d="M5 8H11M8 5V11" stroke="#333" stroke-width="1.6"/></svg>
<div class="abs" style="left:49px;top:669.5px;width:16px;height:14px"><svg width="16" height="14" viewBox="0 0 16 14" fill="none" stroke-linecap="round" stroke-linejoin="round"><circle cx="8" cy="5.5" r="3.8" stroke="#1a1a1a" stroke-width="1.7"/><path d="M10.8 8.3L14.5 12" stroke="#1a1a1a" stroke-width="2"/><circle cx="8" cy="5.5" r="1.2" fill="#d4960a"/><path d="M1 4H2.5" stroke="#d4960a" stroke-width="1"/></svg></div>
<div class="abs sans" style="left:70px;top:668px;line-height:18px">Monitors</div>
<div class="abs" style="left:48px;top:690.0px;width:16px;height:15px"><svg width="16" height="15" viewBox="0 0 16 15" fill="none" stroke-linecap="round" stroke-linejoin="round"><path d="M2 4L5 1.5H14.5V10.5L12 13.5H2Z" fill="#fff" stroke="#1a1a1a" stroke-width="1.2"/><path d="M2 4H12V13.5M12 4L14.5 1.5M7 4V13.5M2 8.5H12" stroke="#1a1a1a" stroke-width="1.1"/><rect x="2.5" y="4.5" width="4" height="3.6" fill="#d4960a"/><rect x="7.5" y="9" width="4" height="4" fill="#d4960a"/><path d="M12.4 8.5V4.5L14.2 2.5V6.5Z" fill="#d4960a"/></svg></div>
<div class="abs sans" style="left:70px;top:689px;line-height:18px">Cell Registers</div>
<div class="abs" style="left:48px;top:710.0px;width:16px;height:17px"><svg width="16" height="17" viewBox="0 0 16 17" fill="none" stroke-linecap="round" stroke-linejoin="round"><path d="M3 4.5L6 2H13.5V8L11 10.5H3Z" fill="#d4960a"/><path d="M3 4.5H11V10.5M11 4.5L13.5 2" stroke="#f3d48a" stroke-width="0.9"/><text x="1" y="16.5" font-family="Liberation Sans,sans-serif" font-size="5.5" font-weight="bold" fill="#1a1a1a">t=0</text></svg></div>
<div class="abs sans" style="left:70px;top:710px;line-height:18px">Initialization</div>
<svg class="abs" style="left:27px;top:732px" width="16" height="16" viewBox="0 0 16 16"><circle cx="8" cy="8" r="7" fill="#f4f5f6" stroke="#b4bbc3" stroke-width="1"/><path d="M5 8H11M8 5V11" stroke="#333" stroke-width="1.6"/></svg>
<div class="abs" style="left:48px;top:732.5px;width:14px;height:14px"><svg width="14" height="14" viewBox="0 0 14 14" fill="none" stroke-linecap="round" stroke-linejoin="round"><circle cx="7" cy="7" r="3.6" fill="#1a1a1a"/><circle cx="7" cy="7" r="4.4" stroke="#1a1a1a" stroke-width="2" stroke-dasharray="1.75 1.7"/></svg></div>
<div class="abs sans" style="left:66px;top:731px;line-height:18px">Calculation Activities</div>
<div class="abs" style="left:48px;top:752.5px;width:16px;height:16px"><svg width="16" height="16" viewBox="0 0 16 16" fill="none" stroke-linecap="round" stroke-linejoin="round"><circle cx="8" cy="8" r="6.6" stroke="#1a1a1a" stroke-width="1.2"/><path d="M5 6.3H11M5 9.7H11" stroke="#d4960a" stroke-width="1.6"/></svg></div>
<div class="abs sans" style="left:70px;top:752px;line-height:18px">Run Calculation</div>
<svg class="abs" style="left:7px;top:769px" width="16" height="16" viewBox="0 0 16 16"><circle cx="8" cy="8" r="5.3" fill="#f4f5f6" stroke="#b4bbc3" stroke-width="1"/><path d="M5.8 8H10.2" stroke="#4d5258" stroke-width="1.7"/></svg>
<div class="abs monob" style="left:28px;top:770px;line-height:16px">Results</div>
<div class="abs" style="left:48px;top:787.0px;width:16px;height:15px"><svg width="16" height="15" viewBox="0 0 16 15" fill="none" stroke-linecap="round" stroke-linejoin="round"><path d="M4 1.5L14.5 3.5L12 13.5L1.5 10.5Z" fill="#d4960a" stroke="#8a5f05" stroke-width="0.8"/></svg></div>
<div class="abs sans" style="left:70px;top:786px;line-height:18px">Surfaces</div>
<svg class="abs" style="left:27px;top:808px" width="16" height="16" viewBox="0 0 16 16"><circle cx="8" cy="8" r="7" fill="#f4f5f6" stroke="#b4bbc3" stroke-width="1"/><path d="M5 8H11M8 5V11" stroke="#333" stroke-width="1.6"/></svg>
<div class="abs" style="left:48px;top:808.5px;width:14px;height:14px"><svg width="14" height="14" viewBox="0 0 14 14" fill="none" stroke-linecap="round" stroke-linejoin="round"><path d="M6.5 2A5.5 5.5 0 1 0 12 7.5H6.5Z" fill="#d4960a"/><path d="M8 1V6H13A5 5 0 0 0 8 1Z" stroke="#1a1a1a" stroke-width="1" fill="#fff"/></svg></div>
<div class="abs sans" style="left:66px;top:807px;line-height:18px">Graphics</div>
<svg class="abs" style="left:27px;top:829px" width="16" height="16" viewBox="0 0 16 16"><circle cx="8" cy="8" r="7" fill="#f4f5f6" stroke="#b4bbc3" stroke-width="1"/><path d="M5 8H11M8 5V11" stroke="#333" stroke-width="1.6"/></svg>
<div class="abs" style="left:48px;top:828.5px;width:16px;height:16px"><svg width="16" height="16" viewBox="0 0 16 16" fill="none" stroke-linecap="round" stroke-linejoin="round"><path d="M1.5 1V14.5H15" stroke="#1a1a1a" stroke-width="1.2"/><path d="M3 12.5Q7 12.5 8 7.5T14 2.5" stroke="#d4960a" stroke-width="1.3"/></svg></div>
<div class="abs sans" style="left:70px;top:828px;line-height:18px">Plots</div>
<svg class="abs" style="left:27px;top:850px" width="16" height="16" viewBox="0 0 16 16"><circle cx="8" cy="8" r="7" fill="#f4f5f6" stroke="#b4bbc3" stroke-width="1"/><path d="M5 8H11M8 5V11" stroke="#333" stroke-width="1.6"/></svg>
<div class="abs" style="left:48px;top:849.5px;width:16px;height:16px"><svg width="16" height="16" viewBox="0 0 16 16" fill="none" stroke-linecap="round" stroke-linejoin="round"><rect x="1.5" y="1.5" width="13" height="13" stroke="#d4960a" stroke-width="1.2"/><path d="M4 1.5V14.5M12 1.5V14.5" stroke="#d4960a" stroke-width="1" stroke-dasharray="1.5 1.5"/><path d="M6.5 5.5L10.5 8L6.5 10.5Z" fill="#d4960a"/></svg></div>
<div class="abs sans" style="left:70px;top:849px;line-height:18px">Animations</div>
</div>
<div class="abs" style="left:272px;top:73px;width:15px;height:787px;background:#b9c5ce"></div>
<div class="abs" style="left:272px;top:73px;width:15px;height:19px;background:#9bacb6"></div>
<div class="abs" style="left:272px;top:92px;width:15px;height:693px;background:#5b6175"></div>
<div class="abs" style="left:272px;top:840px;width:15px;height:20px;background:#9bacb6"></div>
<div class="abs" style="left:275px;top:80px;width:0;height:0;border-left:4.5px solid transparent;border-right:4.5px solid transparent;border-bottom:5px solid #6b7280"></div>
<div class="abs" style="left:275px;top:848px;width:0;height:0;border-left:4.5px solid transparent;border-right:4.5px solid transparent;border-top:5px solid #6b7280"></div>
<div class="abs" style="left:5px;top:860px;width:267px;height:15px;background:#b9c5ce"></div>
<div class="abs" style="left:5px;top:860px;width:20px;height:15px;background:#9bacb6"></div>
<div class="abs" style="left:25px;top:860px;width:202px;height:15px;background:#5b6175"></div>
<div class="abs" style="left:252px;top:860px;width:20px;height:15px;background:#9bacb6"></div>
<div class="abs" style="left:12px;top:863px;width:0;height:0;border-top:4.5px solid transparent;border-bottom:4.5px solid transparent;border-right:5px solid #6b7280"></div>
<div class="abs" style="left:259px;top:863px;width:0;height:0;border-top:4.5px solid transparent;border-bottom:4.5px solid transparent;border-left:5px solid #6b7280"></div>
</div>
<div class="abs" style="left:292px;top:165px;width:3px;height:875px;background:#fff"></div>
<div class="abs" style="left:295px;top:165px;width:422px;height:875px;background:#f3f3f3;border-left:1px solid #b3b3b3;border-right:1px solid #b3b3b3;border-bottom:1px solid #b3b3b3"></div>
<div class="abs" style="left:295px;top:165px;width:422px;height:24px;background:#bfc4cf"></div>
<div class="abs monob" style="left:305px;top:169px;line-height:16px;color:#5a6e8c;margin-top:1px">Task Page</div>
<svg class="abs" style="left:704px;top:170px" width="10" height="12" viewBox="0 0 10 12" fill="none"><path d="M7.5 2L3 6L7.5 10" stroke="#222" stroke-width="1.3"/></svg>
<div class="abs monob" style="left:305px;top:209px;line-height:16px;margin-top:1px">Boundary Conditions</div>
<div class="abs" style="left:671px;top:202px;width:28px;height:26px;border:1px solid #3d4756;border-radius:4px;background:#fafafa"></div>
<svg class="abs" style="left:676px;top:206px" width="18" height="18" viewBox="0 0 18 18" fill="none"><circle cx="9" cy="9" r="7.3" stroke="#1a1a1a" stroke-width="1.1"/><text x="9" y="13" text-anchor="middle" font-family="Liberation Sans,sans-serif" font-weight="bold" font-size="11" fill="#d4960a">?</text></svg>
<div class="abs mono" style="left:306px;top:252px;line-height:16px;margin-top:1px">Zone</div>
<div class="abs" style="left:339px;top:251px;width:286px;height:18px;border:1px solid #b8c2d3;border-radius:4px;background:#f8f8f8"></div>
<div class="abs mono" style="left:342px;top:252px;line-height:16px;color:#8a8a8a;margin-top:1px">Filter Text</div>
<div class="abs" style="left:633px;top:247px;width:28px;height:26px;border:1px solid #3d4756;border-radius:4px;background:#fafafa"></div>
<div class="abs" style="left:671px;top:247px;width:28px;height:26px;border:1px solid #3d4756;border-radius:4px;background:#fafafa"></div>
<svg class="abs" style="left:637px;top:250px" width="20" height="20" viewBox="0 0 20 20" fill="none"><path d="M2 4.5H12M2 8.5H9M2 12.5H5" stroke="#1a1a1a" stroke-width="2"/><circle cx="13" cy="13.5" r="3.6" stroke="#d4960a" stroke-width="1.8"/></svg>
<svg class="abs" style="left:675px;top:250px" width="20" height="20" viewBox="0 0 20 20" fill="none"><path d="M2 4.5H17M2 8.5H13M2 12.5H9" stroke="#1a1a1a" stroke-width="2"/><path d="M13 13.5H19L16 17Z" fill="#9a9a9a"/></svg>
<div class="abs" style="left:305px;top:278px;width:395px;height:544px;border:2px solid #e0e0e0;border-radius:4px;background:#fff"></div>
<div class="abs sans" style="left:310px;top:280px;line-height:18px">inlet</div>
<div class="abs sans" style="left:310px;top:299px;line-height:18px">int_fluid_rotor</div>
<div class="abs sans" style="left:310px;top:318px;line-height:18px">int_fluid_static</div>
<div class="abs sans" style="left:310px;top:337px;line-height:18px">int_fluid_woke</div>
<div class="abs sans" style="left:310px;top:356px;line-height:18px">interface_1_1</div>
<div class="abs sans" style="left:310px;top:375px;line-height:18px">interface_1_2</div>
<div class="abs sans" style="left:310px;top:394px;line-height:18px">interface_2_1</div>
<div class="abs sans" style="left:310px;top:413px;line-height:18px">interface_2_2</div>
<div class="abs sans" style="left:310px;top:432px;line-height:18px">outlet</div>
<div class="abs sans" style="left:310px;top:451px;line-height:18px">wall_blade</div>
<div class="abs sans" style="left:310px;top:470px;line-height:18px">wall_in</div>
<div class="abs sans" style="left:310px;top:489px;line-height:18px">wall_rotor_bottom</div>
<div class="abs sans" style="left:310px;top:508px;line-height:18px">wall_rotor_up</div>
<div class="abs sans" style="left:310px;top:527px;line-height:18px">wall_woke</div>
<div class="abs mono" style="left:305px;top:828px;line-height:16px;color:#8a8a8a;margin-top:1px">Phase</div>
<div class="abs mono" style="left:393px;top:828px;line-height:16px;color:#8a8a8a;margin-top:1px">Type</div>
<div class="abs mono" style="left:543px;top:827px;line-height:16px;margin-top:1px">ID</div>
<div class="abs" style="left:305px;top:844px;width:82px;height:23px;border:1px solid #d0d2d8;border-radius:4px;background:#e9e9e9"></div>
<div class="abs" style="left:393px;top:844px;width:144px;height:23px;border:1px solid #d0d2d8;border-radius:4px;background:#e9e9e9"></div>
<div class="abs dd" style="left:370px;top:853px;border-top-color:#555"></div>
<div class="abs dd" style="left:520px;top:853px;border-top-color:#555"></div>
<div class="abs" style="left:543px;top:845px;width:90px;height:23px;border:1px solid #b8c2d3;border-radius:4px;background:#fdfdfd"></div>
<div class="abs mono" style="left:550px;top:849px;line-height:16px;margin-top:1px">-1</div>
<div class="abs mono" style="left:313px;top:878px;width:113px;height:27px;line-height:27px;text-align:center;background:#d6d8de;border-radius:4px;color:#8d8d8d"><span style="position:relative;top:1px">Edit...</span></div>
<div class="abs mono" style="left:448px;top:878px;width:64px;height:27px;line-height:25px;text-align:center;background:#fafafa;border:1px solid #3d4756;border-radius:4px;color:#000"><span style="position:relative;top:1px">Copy...</span></div>
<div class="abs mono" style="left:516px;top:878px;width:92px;height:27px;line-height:25px;text-align:center;background:#fafafa;border:1px solid #3d4756;border-radius:4px;color:#000"><span style="position:relative;top:1px">Profiles...</span></div>
<div class="abs mono" style="left:313px;top:909px;width:113px;height:27px;line-height:25px;text-align:center;background:#fafafa;border:1px solid #3d4756;border-radius:4px;color:#000"><span style="position:relative;top:1px">Parameters...</span></div>
<div class="abs mono" style="left:313px;top:940px;width:113px;height:27px;line-height:25px;text-align:center;background:#fafafa;border:1px solid #3d4756;border-radius:4px;color:#000"><span style="position:relative;top:1px">Display Mesh...</span></div>
<div class="abs mono" style="left:442px;top:921px;width:169px;height:27px;line-height:25px;text-align:center;background:#fafafa;border:1px solid #3d4756;border-radius:4px;color:#000"><span style="position:relative;top:1px">Operating Conditions...</span></div>
<div class="abs mono" style="left:442px;top:958px;width:176px;height:27px;line-height:27px;text-align:center;background:#d6d8de;border-radius:4px;color:#8d8d8d"><span style="position:relative;top:1px">Periodic Conditions...</span></div>
<div class="abs" style="left:307px;top:995px;width:14px;height:14px;border:1px solid #cfcfcf;background:#f0f0f0;border-radius:1px"></div>
<div class="abs mono" style="left:326px;top:995px;line-height:16px;color:#8a8a8a;margin-top:1px">Highlight Zone</div>
<svg class="abs" style="left:765px;top:165px" width="1155" height="699" viewBox="765 165 1155 699">
<defs><linearGradient id="bg" x1="0" y1="0" x2="0" y2="1"><stop offset="0" stop-color="#ccd2e3"/><stop offset="1" stop-color="#ffffff"/></linearGradient>
<pattern id="m1" width="3" height="3" patternUnits="userSpaceOnUse" patternTransform="rotate(35)"><rect width="3" height="3" fill="#050505"/><path d="M0 0H3M0 0V3" stroke="#4c4c4c" stroke-width="0.7"/></pattern>
<pattern id="m2" width="3" height="3" patternUnits="userSpaceOnUse" patternTransform="rotate(5)"><rect width="3" height="3" fill="#1c1c1c"/><path d="M0 0H3M0 0V3" stroke="#646464" stroke-width="0.8"/></pattern>
<filter id="bl" x="-20%" y="-100%" width="140%" height="300%"><feGaussianBlur stdDeviation="6 2.4"/></filter>
<radialGradient id="cy"><stop offset="0.1" stop-color="#7fe6ee"/><stop offset="1" stop-color="#0d98a6"/></radialGradient>
<pattern id="m3" width="2.8" height="2.8" patternUnits="userSpaceOnUse" patternTransform="rotate(12)"><path d="M0 0H2.8M0 0V2.8" stroke="#6a6a6a" stroke-width="0.7"/></pattern>
<linearGradient id="pg" gradientUnits="userSpaceOnUse" x1="1100" y1="255" x2="1090" y2="318"><stop offset="0" stop-color="#fff"/><stop offset="0.55" stop-color="#999"/><stop offset="1" stop-color="#111"/></linearGradient>
<linearGradient id="pg2" gradientUnits="userSpaceOnUse" x1="990" y1="0" x2="1300" y2="0"><stop offset="0" stop-color="#fff"/><stop offset="0.6" stop-color="#bbb"/><stop offset="1" stop-color="#000"/></linearGradient>
<mask id="pm"><rect x="960" y="200" width="380" height="160" fill="url(#pg)"/><rect x="960" y="200" width="380" height="160" fill="url(#pg2)" style="mix-blend-mode:multiply"/></mask>
<filter id="bl2" x="-50%" y="-50%" width="200%" height="200%"><feGaussianBlur stdDeviation="7"/></filter>
<linearGradient id="cg" gradientUnits="userSpaceOnUse" x1="1480" y1="533" x2="1470" y2="640"><stop offset="0" stop-color="#fff" stop-opacity="0.10"/><stop offset="0.35" stop-color="#fff" stop-opacity="0.04"/><stop offset="0.6" stop-color="#000" stop-opacity="0.15"/><stop offset="1" stop-color="#000" stop-opacity="0.6"/></linearGradient>
<pattern id="m4" width="2.4" height="2.4" patternUnits="userSpaceOnUse" patternTransform="rotate(40)"><rect width="2.4" height="2.4" fill="#080000"/><path d="M0 0H2.4M0 0V2.4" stroke="#c80000" stroke-width="0.6"/></pattern>
</defs>
<rect x="765" y="165" width="1155" height="699" fill="url(#bg)"/>
<g filter="url(#bl)"><path d="M1166 868 L1300 851 L1391 843 L1511 829 L1562 830.5 L1455 844.5 L1408 851.5 L1445 858 L1500 868 Z" fill="#585858"/></g>
<clipPath id="dk"><path d="M981.0 230.0C992.5 232.7 1027.2 240.7 1050.0 246.0C1072.8 251.3 1096.3 257.0 1118.0 262.0C1139.7 267.0 1160.2 271.3 1180.0 276.0C1199.8 280.7 1220.3 286.2 1237.0 290.0C1253.7 293.8 1266.1 296.3 1280.0 298.9C1293.9 301.5 1306.9 303.8 1320.4 305.6C1333.9 307.4 1349.6 308.2 1360.8 309.6C1372.0 311.0 1378.7 311.2 1387.7 313.7C1396.7 316.2 1405.7 319.9 1414.7 324.4C1423.7 328.9 1432.6 334.1 1441.6 340.6C1450.6 347.1 1460.4 355.6 1468.5 363.5C1476.6 371.4 1483.2 379.2 1490.0 387.7C1496.8 396.2 1503.6 405.7 1509.0 414.7C1514.4 423.7 1518.4 431.7 1522.4 441.6C1526.4 451.5 1530.3 464.0 1533.0 473.9C1535.7 483.8 1537.0 490.9 1538.6 500.8C1540.2 510.7 1541.7 520.6 1542.6 533.0C1543.5 545.4 1544.4 561.3 1544.0 575.0C1543.6 588.7 1541.8 603.6 1540.0 615.0C1538.2 626.4 1535.2 634.6 1533.1 643.3C1530.9 652.0 1529.7 658.5 1527.1 667.3C1524.5 676.1 1521.5 686.6 1517.5 696.2C1513.5 705.8 1508.7 715.4 1503.1 725.0C1497.5 734.6 1491.0 744.6 1483.8 753.8C1476.6 763.0 1468.6 772.3 1459.8 780.3C1451.0 788.3 1441.4 795.5 1431.0 801.9C1420.6 808.3 1408.5 814.5 1397.3 818.8C1386.1 823.0 1373.2 825.4 1363.7 827.2C1354.2 829.0 1349.1 829.7 1340.0 829.4C1330.9 829.1 1319.5 827.8 1309.2 825.6C1299.0 823.4 1288.8 820.3 1278.5 816.0C1268.2 811.7 1257.3 805.9 1247.7 799.6C1238.1 793.4 1229.1 786.2 1220.8 778.5C1212.5 770.8 1204.4 762.2 1197.7 753.5C1191.0 744.8 1185.5 735.8 1180.4 726.5C1175.3 717.2 1170.8 707.3 1167.0 697.7C1163.2 688.1 1159.9 678.4 1157.3 668.8C1154.7 659.2 1153.0 650.6 1151.5 640.0C1150.0 629.4 1148.9 616.7 1148.2 605.0C1147.5 593.3 1147.5 578.8 1147.5 570.0C1147.5 561.2 1148.0 559.2 1148.5 552.5C1149.0 545.8 1149.5 537.9 1150.6 530.0C1151.7 522.1 1153.0 513.3 1155.0 505.0C1157.0 496.7 1159.8 487.7 1162.5 480.0C1165.2 472.3 1168.1 465.4 1171.2 458.8C1174.4 452.1 1176.8 447.5 1181.2 440.0C1185.7 432.5 1191.9 422.3 1198.0 414.0C1204.1 405.7 1211.0 397.8 1218.0 390.0C1225.0 382.2 1232.2 374.0 1240.0 367.5C1247.8 361.0 1256.7 355.6 1265.0 351.0C1273.3 346.4 1281.7 343.1 1290.0 340.0C1298.3 336.9 1309.2 334.0 1315.0 332.5C1320.8 331.0 1323.3 331.2 1325.0 331.0L1325.0 331.0C1317.5 330.3 1298.0 328.5 1280.0 327.0C1262.0 325.5 1242.0 324.1 1217.0 322.0C1192.0 319.9 1157.8 316.8 1130.0 314.5C1102.2 312.2 1076.0 310.1 1050.0 308.0C1024.0 305.9 986.7 303.0 974.0 302.0A18 36 0 0 1 981 230ZM1329.4 343.1C1327.0 345.1 1319.5 350.9 1315.0 355.0C1310.5 359.1 1306.7 362.7 1302.5 367.5C1298.3 372.3 1293.8 378.3 1290.0 383.8C1286.2 389.2 1283.1 394.4 1280.0 400.0C1276.9 405.6 1274.0 411.5 1271.2 417.5C1268.5 423.5 1266.1 429.9 1263.8 436.2C1261.4 442.6 1259.2 447.5 1256.9 455.5C1254.6 463.5 1251.4 475.3 1249.7 484.4C1248.0 493.5 1247.0 501.2 1246.8 510.3C1246.6 519.4 1247.7 530.5 1248.8 539.1C1249.9 547.7 1251.7 554.6 1253.5 562.0C1255.3 569.4 1256.3 576.1 1259.8 583.6C1263.2 591.1 1268.4 599.5 1274.2 606.7C1280.0 613.9 1287.2 621.1 1294.4 626.9C1301.6 632.7 1311.2 638.3 1317.4 641.3C1323.6 644.3 1327.5 644.9 1331.8 645.0C1336.1 645.1 1341.5 642.4 1343.4 641.9L1326.1 639.2C1322.7 637.5 1313.1 634.2 1305.9 629.2C1298.7 624.2 1289.5 616.2 1282.8 609.0C1276.1 601.8 1269.8 593.3 1265.5 586.0C1261.2 578.7 1259.3 573.3 1256.9 565.0C1254.5 556.7 1252.3 545.9 1251.3 536.3C1250.3 526.7 1249.8 516.5 1250.7 507.4C1251.6 498.3 1254.4 490.1 1256.9 481.5C1259.4 472.9 1263.5 462.0 1265.5 455.5C1267.5 449.0 1267.0 447.2 1268.8 442.5C1270.5 437.8 1273.8 432.5 1276.2 427.5C1278.8 422.5 1281.0 417.3 1283.8 412.5C1286.5 407.7 1289.4 403.3 1292.5 398.8C1295.6 394.2 1298.8 389.6 1302.5 385.0C1306.2 380.4 1310.8 375.4 1315.0 371.2C1319.2 367.1 1323.3 363.5 1327.5 360.0C1331.7 356.5 1335.3 353.0 1340.0 350.0C1344.7 347.0 1353.0 343.2 1355.6 341.9ZM1176.7 527.4C1176.2 530.5 1174.0 538.2 1173.8 546.1C1173.6 554.0 1174.0 564.9 1175.6 575.0C1177.2 585.1 1179.8 596.6 1183.3 606.7C1186.8 616.8 1190.8 625.9 1196.3 635.5C1201.8 645.1 1209.3 656.2 1216.5 664.4C1223.7 672.6 1231.4 679.0 1239.6 684.5C1247.8 690.0 1256.4 694.6 1265.5 697.5C1274.6 700.4 1284.3 701.8 1294.4 701.8C1304.5 701.8 1316.0 700.6 1326.1 697.5C1336.2 694.4 1350.1 685.5 1354.9 683.1L1329.0 690.3C1324.2 690.5 1309.2 692.5 1300.1 691.8C1291.0 691.1 1282.8 689.4 1274.2 686.0C1265.6 682.6 1256.4 677.6 1248.2 671.6C1240.0 665.6 1232.4 658.3 1225.2 649.9C1218.0 641.5 1210.8 631.2 1205.0 621.1C1199.2 611.0 1194.4 600.0 1190.6 589.4C1186.8 578.8 1184.1 567.8 1181.9 557.7C1179.7 547.6 1178.3 533.6 1177.6 528.8ZM1315.0 473.9C1318.2 469.4 1326.3 455.1 1333.9 447.0C1341.5 438.9 1350.9 431.0 1360.8 425.4C1370.7 419.8 1383.2 415.1 1393.1 413.3C1403.0 411.5 1411.0 412.7 1420.0 414.7C1429.0 416.7 1438.0 420.0 1447.0 425.4C1456.0 430.8 1466.3 440.3 1473.9 447.0C1481.5 453.7 1488.5 460.4 1492.8 465.8C1497.1 471.2 1498.4 477.1 1499.5 479.3L1495.5 473.9C1491.0 470.3 1477.5 458.7 1468.5 452.4C1459.5 446.1 1450.6 440.3 1441.6 436.2C1432.6 432.1 1422.8 429.3 1414.7 427.6C1406.6 425.9 1400.7 425.5 1393.1 426.0C1385.5 426.5 1377.0 427.8 1368.9 430.8C1360.8 433.9 1351.8 438.9 1344.6 444.3C1337.4 449.7 1330.7 457.9 1325.8 463.1C1320.9 468.3 1316.8 473.3 1315.0 475.3ZM1358.1 496.8C1360.8 495.4 1368.5 490.8 1374.3 488.7C1380.1 486.6 1387.3 484.1 1393.1 484.1C1398.9 484.1 1403.9 486.1 1409.3 488.7C1414.7 491.3 1420.0 495.2 1425.4 499.5C1430.8 503.8 1436.9 509.1 1441.6 514.3C1446.3 519.5 1451.7 527.8 1453.7 530.5L1447.0 523.7C1444.3 521.2 1436.2 513.2 1430.8 508.9C1425.4 504.6 1420.5 501.0 1414.7 498.1C1408.9 495.2 1402.1 492.3 1395.8 491.4C1389.5 490.5 1383.3 491.8 1377.0 492.8C1370.7 493.8 1361.2 496.8 1358.1 497.6ZM1248.2 774.5C1252.5 775.1 1265.1 778.1 1274.2 778.3C1283.3 778.4 1293.4 777.6 1303.0 775.4C1312.6 773.2 1322.2 769.9 1331.8 765.3C1341.4 760.7 1352.7 753.3 1360.7 748.0C1368.7 742.7 1373.1 739.6 1380.0 733.6C1386.9 727.6 1398.3 715.4 1402.0 711.8L1395.0 725.0C1392.5 727.9 1386.8 735.4 1380.0 742.2C1373.2 749.0 1362.3 759.8 1354.0 765.9C1345.7 772.0 1336.1 776.0 1330.0 779.0C1323.9 782.0 1323.8 782.0 1317.4 784.0C1311.0 786.0 1299.2 789.7 1291.5 790.7C1283.8 791.7 1274.7 789.9 1271.3 789.8Z" clip-rule="evenodd"/></clipPath>
<path d="M981.0 230.0C992.5 232.7 1027.2 240.7 1050.0 246.0C1072.8 251.3 1096.3 257.0 1118.0 262.0C1139.7 267.0 1160.2 271.3 1180.0 276.0C1199.8 280.7 1220.3 286.2 1237.0 290.0C1253.7 293.8 1266.1 296.3 1280.0 298.9C1293.9 301.5 1306.9 303.8 1320.4 305.6C1333.9 307.4 1349.6 308.2 1360.8 309.6C1372.0 311.0 1378.7 311.2 1387.7 313.7C1396.7 316.2 1405.7 319.9 1414.7 324.4C1423.7 328.9 1432.6 334.1 1441.6 340.6C1450.6 347.1 1460.4 355.6 1468.5 363.5C1476.6 371.4 1483.2 379.2 1490.0 387.7C1496.8 396.2 1503.6 405.7 1509.0 414.7C1514.4 423.7 1518.4 431.7 1522.4 441.6C1526.4 451.5 1530.3 464.0 1533.0 473.9C1535.7 483.8 1537.0 490.9 1538.6 500.8C1540.2 510.7 1541.7 520.6 1542.6 533.0C1543.5 545.4 1544.4 561.3 1544.0 575.0C1543.6 588.7 1541.8 603.6 1540.0 615.0C1538.2 626.4 1535.2 634.6 1533.1 643.3C1530.9 652.0 1529.7 658.5 1527.1 667.3C1524.5 676.1 1521.5 686.6 1517.5 696.2C1513.5 705.8 1508.7 715.4 1503.1 725.0C1497.5 734.6 1491.0 744.6 1483.8 753.8C1476.6 763.0 1468.6 772.3 1459.8 780.3C1451.0 788.3 1441.4 795.5 1431.0 801.9C1420.6 808.3 1408.5 814.5 1397.3 818.8C1386.1 823.0 1373.2 825.4 1363.7 827.2C1354.2 829.0 1349.1 829.7 1340.0 829.4C1330.9 829.1 1319.5 827.8 1309.2 825.6C1299.0 823.4 1288.8 820.3 1278.5 816.0C1268.2 811.7 1257.3 805.9 1247.7 799.6C1238.1 793.4 1229.1 786.2 1220.8 778.5C1212.5 770.8 1204.4 762.2 1197.7 753.5C1191.0 744.8 1185.5 735.8 1180.4 726.5C1175.3 717.2 1170.8 707.3 1167.0 697.7C1163.2 688.1 1159.9 678.4 1157.3 668.8C1154.7 659.2 1153.0 650.6 1151.5 640.0C1150.0 629.4 1148.9 616.7 1148.2 605.0C1147.5 593.3 1147.5 578.8 1147.5 570.0C1147.5 561.2 1148.0 559.2 1148.5 552.5C1149.0 545.8 1149.5 537.9 1150.6 530.0C1151.7 522.1 1153.0 513.3 1155.0 505.0C1157.0 496.7 1159.8 487.7 1162.5 480.0C1165.2 472.3 1168.1 465.4 1171.2 458.8C1174.4 452.1 1176.8 447.5 1181.2 440.0C1185.7 432.5 1191.9 422.3 1198.0 414.0C1204.1 405.7 1211.0 397.8 1218.0 390.0C1225.0 382.2 1232.2 374.0 1240.0 367.5C1247.8 361.0 1256.7 355.6 1265.0 351.0C1273.3 346.4 1281.7 343.1 1290.0 340.0C1298.3 336.9 1309.2 334.0 1315.0 332.5C1320.8 331.0 1323.3 331.2 1325.0 331.0L1325.0 331.0C1317.5 330.3 1298.0 328.5 1280.0 327.0C1262.0 325.5 1242.0 324.1 1217.0 322.0C1192.0 319.9 1157.8 316.8 1130.0 314.5C1102.2 312.2 1076.0 310.1 1050.0 308.0C1024.0 305.9 986.7 303.0 974.0 302.0A18 36 0 0 1 981 230ZM1329.4 343.1C1327.0 345.1 1319.5 350.9 1315.0 355.0C1310.5 359.1 1306.7 362.7 1302.5 367.5C1298.3 372.3 1293.8 378.3 1290.0 383.8C1286.2 389.2 1283.1 394.4 1280.0 400.0C1276.9 405.6 1274.0 411.5 1271.2 417.5C1268.5 423.5 1266.1 429.9 1263.8 436.2C1261.4 442.6 1259.2 447.5 1256.9 455.5C1254.6 463.5 1251.4 475.3 1249.7 484.4C1248.0 493.5 1247.0 501.2 1246.8 510.3C1246.6 519.4 1247.7 530.5 1248.8 539.1C1249.9 547.7 1251.7 554.6 1253.5 562.0C1255.3 569.4 1256.3 576.1 1259.8 583.6C1263.2 591.1 1268.4 599.5 1274.2 606.7C1280.0 613.9 1287.2 621.1 1294.4 626.9C1301.6 632.7 1311.2 638.3 1317.4 641.3C1323.6 644.3 1327.5 644.9 1331.8 645.0C1336.1 645.1 1341.5 642.4 1343.4 641.9L1326.1 639.2C1322.7 637.5 1313.1 634.2 1305.9 629.2C1298.7 624.2 1289.5 616.2 1282.8 609.0C1276.1 601.8 1269.8 593.3 1265.5 586.0C1261.2 578.7 1259.3 573.3 1256.9 565.0C1254.5 556.7 1252.3 545.9 1251.3 536.3C1250.3 526.7 1249.8 516.5 1250.7 507.4C1251.6 498.3 1254.4 490.1 1256.9 481.5C1259.4 472.9 1263.5 462.0 1265.5 455.5C1267.5 449.0 1267.0 447.2 1268.8 442.5C1270.5 437.8 1273.8 432.5 1276.2 427.5C1278.8 422.5 1281.0 417.3 1283.8 412.5C1286.5 407.7 1289.4 403.3 1292.5 398.8C1295.6 394.2 1298.8 389.6 1302.5 385.0C1306.2 380.4 1310.8 375.4 1315.0 371.2C1319.2 367.1 1323.3 363.5 1327.5 360.0C1331.7 356.5 1335.3 353.0 1340.0 350.0C1344.7 347.0 1353.0 343.2 1355.6 341.9ZM1176.7 527.4C1176.2 530.5 1174.0 538.2 1173.8 546.1C1173.6 554.0 1174.0 564.9 1175.6 575.0C1177.2 585.1 1179.8 596.6 1183.3 606.7C1186.8 616.8 1190.8 625.9 1196.3 635.5C1201.8 645.1 1209.3 656.2 1216.5 664.4C1223.7 672.6 1231.4 679.0 1239.6 684.5C1247.8 690.0 1256.4 694.6 1265.5 697.5C1274.6 700.4 1284.3 701.8 1294.4 701.8C1304.5 701.8 1316.0 700.6 1326.1 697.5C1336.2 694.4 1350.1 685.5 1354.9 683.1L1329.0 690.3C1324.2 690.5 1309.2 692.5 1300.1 691.8C1291.0 691.1 1282.8 689.4 1274.2 686.0C1265.6 682.6 1256.4 677.6 1248.2 671.6C1240.0 665.6 1232.4 658.3 1225.2 649.9C1218.0 641.5 1210.8 631.2 1205.0 621.1C1199.2 611.0 1194.4 600.0 1190.6 589.4C1186.8 578.8 1184.1 567.8 1181.9 557.7C1179.7 547.6 1178.3 533.6 1177.6 528.8ZM1315.0 473.9C1318.2 469.4 1326.3 455.1 1333.9 447.0C1341.5 438.9 1350.9 431.0 1360.8 425.4C1370.7 419.8 1383.2 415.1 1393.1 413.3C1403.0 411.5 1411.0 412.7 1420.0 414.7C1429.0 416.7 1438.0 420.0 1447.0 425.4C1456.0 430.8 1466.3 440.3 1473.9 447.0C1481.5 453.7 1488.5 460.4 1492.8 465.8C1497.1 471.2 1498.4 477.1 1499.5 479.3L1495.5 473.9C1491.0 470.3 1477.5 458.7 1468.5 452.4C1459.5 446.1 1450.6 440.3 1441.6 436.2C1432.6 432.1 1422.8 429.3 1414.7 427.6C1406.6 425.9 1400.7 425.5 1393.1 426.0C1385.5 426.5 1377.0 427.8 1368.9 430.8C1360.8 433.9 1351.8 438.9 1344.6 444.3C1337.4 449.7 1330.7 457.9 1325.8 463.1C1320.9 468.3 1316.8 473.3 1315.0 475.3ZM1358.1 496.8C1360.8 495.4 1368.5 490.8 1374.3 488.7C1380.1 486.6 1387.3 484.1 1393.1 484.1C1398.9 484.1 1403.9 486.1 1409.3 488.7C1414.7 491.3 1420.0 495.2 1425.4 499.5C1430.8 503.8 1436.9 509.1 1441.6 514.3C1446.3 519.5 1451.7 527.8 1453.7 530.5L1447.0 523.7C1444.3 521.2 1436.2 513.2 1430.8 508.9C1425.4 504.6 1420.5 501.0 1414.7 498.1C1408.9 495.2 1402.1 492.3 1395.8 491.4C1389.5 490.5 1383.3 491.8 1377.0 492.8C1370.7 493.8 1361.2 496.8 1358.1 497.6ZM1248.2 774.5C1252.5 775.1 1265.1 778.1 1274.2 778.3C1283.3 778.4 1293.4 777.6 1303.0 775.4C1312.6 773.2 1322.2 769.9 1331.8 765.3C1341.4 760.7 1352.7 753.3 1360.7 748.0C1368.7 742.7 1373.1 739.6 1380.0 733.6C1386.9 727.6 1398.3 715.4 1402.0 711.8L1395.0 725.0C1392.5 727.9 1386.8 735.4 1380.0 742.2C1373.2 749.0 1362.3 759.8 1354.0 765.9C1345.7 772.0 1336.1 776.0 1330.0 779.0C1323.9 782.0 1323.8 782.0 1317.4 784.0C1311.0 786.0 1299.2 789.7 1291.5 790.7C1283.8 791.7 1274.7 789.9 1271.3 789.8Z" fill="url(#m1)" fill-rule="evenodd"/>
<g clip-path="url(#dk)" fill="none" stroke="#040404" stroke-linecap="round">
<path d="M981.0 230.0C992.5 232.7 1027.2 240.7 1050.0 246.0C1072.8 251.3 1096.3 257.0 1118.0 262.0C1139.7 267.0 1160.2 271.3 1180.0 276.0C1199.8 280.7 1220.3 286.2 1237.0 290.0C1253.7 293.8 1266.1 296.3 1280.0 298.9C1293.9 301.5 1306.9 303.8 1320.4 305.6C1333.9 307.4 1349.6 308.2 1360.8 309.6C1372.0 311.0 1378.7 311.2 1387.7 313.7C1396.7 316.2 1405.7 319.9 1414.7 324.4C1423.7 328.9 1432.6 334.1 1441.6 340.6C1450.6 347.1 1460.4 355.6 1468.5 363.5C1476.6 371.4 1483.2 379.2 1490.0 387.7C1496.8 396.2 1503.6 405.7 1509.0 414.7C1514.4 423.7 1518.4 431.7 1522.4 441.6C1526.4 451.5 1530.3 464.0 1533.0 473.9C1535.7 483.8 1537.0 490.9 1538.6 500.8C1540.2 510.7 1541.7 520.6 1542.6 533.0C1543.5 545.4 1544.4 561.3 1544.0 575.0C1543.6 588.7 1541.8 603.6 1540.0 615.0C1538.2 626.4 1535.2 634.6 1533.1 643.3C1530.9 652.0 1529.7 658.5 1527.1 667.3C1524.5 676.1 1521.5 686.6 1517.5 696.2C1513.5 705.8 1508.7 715.4 1503.1 725.0C1497.5 734.6 1491.0 744.6 1483.8 753.8C1476.6 763.0 1468.6 772.3 1459.8 780.3C1451.0 788.3 1441.4 795.5 1431.0 801.9C1420.6 808.3 1408.5 814.5 1397.3 818.8C1386.1 823.0 1373.2 825.4 1363.7 827.2C1354.2 829.0 1349.1 829.7 1340.0 829.4C1330.9 829.1 1319.5 827.8 1309.2 825.6C1299.0 823.4 1288.8 820.3 1278.5 816.0C1268.2 811.7 1257.3 805.9 1247.7 799.6C1238.1 793.4 1229.1 786.2 1220.8 778.5C1212.5 770.8 1204.4 762.2 1197.7 753.5C1191.0 744.8 1185.5 735.8 1180.4 726.5C1175.3 717.2 1170.8 707.3 1167.0 697.7C1163.2 688.1 1159.9 678.4 1157.3 668.8C1154.7 659.2 1153.0 650.6 1151.5 640.0C1150.0 629.4 1148.9 616.7 1148.2 605.0C1147.5 593.3 1147.5 578.8 1147.5 570.0C1147.5 561.2 1148.0 559.2 1148.5 552.5C1149.0 545.8 1149.5 537.9 1150.6 530.0C1151.7 522.1 1153.0 513.3 1155.0 505.0C1157.0 496.7 1159.8 487.7 1162.5 480.0C1165.2 472.3 1168.1 465.4 1171.2 458.8C1174.4 452.1 1176.8 447.5 1181.2 440.0C1185.7 432.5 1191.9 422.3 1198.0 414.0C1204.1 405.7 1211.0 397.8 1218.0 390.0C1225.0 382.2 1232.2 374.0 1240.0 367.5C1247.8 361.0 1256.7 355.6 1265.0 351.0C1273.3 346.4 1281.7 343.1 1290.0 340.0C1298.3 336.9 1309.2 334.0 1315.0 332.5C1320.8 331.0 1323.3 331.2 1325.0 331.0L1325.0 331.0C1317.5 330.3 1298.0 328.5 1280.0 327.0C1262.0 325.5 1242.0 324.1 1217.0 322.0C1192.0 319.9 1157.8 316.8 1130.0 314.5C1102.2 312.2 1076.0 310.1 1050.0 308.0C1024.0 305.9 986.7 303.0 974.0 302.0A18 36 0 0 1 981 230ZM1329.4 343.1C1327.0 345.1 1319.5 350.9 1315.0 355.0C1310.5 359.1 1306.7 362.7 1302.5 367.5C1298.3 372.3 1293.8 378.3 1290.0 383.8C1286.2 389.2 1283.1 394.4 1280.0 400.0C1276.9 405.6 1274.0 411.5 1271.2 417.5C1268.5 423.5 1266.1 429.9 1263.8 436.2C1261.4 442.6 1259.2 447.5 1256.9 455.5C1254.6 463.5 1251.4 475.3 1249.7 484.4C1248.0 493.5 1247.0 501.2 1246.8 510.3C1246.6 519.4 1247.7 530.5 1248.8 539.1C1249.9 547.7 1251.7 554.6 1253.5 562.0C1255.3 569.4 1256.3 576.1 1259.8 583.6C1263.2 591.1 1268.4 599.5 1274.2 606.7C1280.0 613.9 1287.2 621.1 1294.4 626.9C1301.6 632.7 1311.2 638.3 1317.4 641.3C1323.6 644.3 1327.5 644.9 1331.8 645.0C1336.1 645.1 1341.5 642.4 1343.4 641.9L1326.1 639.2C1322.7 637.5 1313.1 634.2 1305.9 629.2C1298.7 624.2 1289.5 616.2 1282.8 609.0C1276.1 601.8 1269.8 593.3 1265.5 586.0C1261.2 578.7 1259.3 573.3 1256.9 565.0C1254.5 556.7 1252.3 545.9 1251.3 536.3C1250.3 526.7 1249.8 516.5 1250.7 507.4C1251.6 498.3 1254.4 490.1 1256.9 481.5C1259.4 472.9 1263.5 462.0 1265.5 455.5C1267.5 449.0 1267.0 447.2 1268.8 442.5C1270.5 437.8 1273.8 432.5 1276.2 427.5C1278.8 422.5 1281.0 417.3 1283.8 412.5C1286.5 407.7 1289.4 403.3 1292.5 398.8C1295.6 394.2 1298.8 389.6 1302.5 385.0C1306.2 380.4 1310.8 375.4 1315.0 371.2C1319.2 367.1 1323.3 363.5 1327.5 360.0C1331.7 356.5 1335.3 353.0 1340.0 350.0C1344.7 347.0 1353.0 343.2 1355.6 341.9ZM1176.7 527.4C1176.2 530.5 1174.0 538.2 1173.8 546.1C1173.6 554.0 1174.0 564.9 1175.6 575.0C1177.2 585.1 1179.8 596.6 1183.3 606.7C1186.8 616.8 1190.8 625.9 1196.3 635.5C1201.8 645.1 1209.3 656.2 1216.5 664.4C1223.7 672.6 1231.4 679.0 1239.6 684.5C1247.8 690.0 1256.4 694.6 1265.5 697.5C1274.6 700.4 1284.3 701.8 1294.4 701.8C1304.5 701.8 1316.0 700.6 1326.1 697.5C1336.2 694.4 1350.1 685.5 1354.9 683.1L1329.0 690.3C1324.2 690.5 1309.2 692.5 1300.1 691.8C1291.0 691.1 1282.8 689.4 1274.2 686.0C1265.6 682.6 1256.4 677.6 1248.2 671.6C1240.0 665.6 1232.4 658.3 1225.2 649.9C1218.0 641.5 1210.8 631.2 1205.0 621.1C1199.2 611.0 1194.4 600.0 1190.6 589.4C1186.8 578.8 1184.1 567.8 1181.9 557.7C1179.7 547.6 1178.3 533.6 1177.6 528.8ZM1315.0 473.9C1318.2 469.4 1326.3 455.1 1333.9 447.0C1341.5 438.9 1350.9 431.0 1360.8 425.4C1370.7 419.8 1383.2 415.1 1393.1 413.3C1403.0 411.5 1411.0 412.7 1420.0 414.7C1429.0 416.7 1438.0 420.0 1447.0 425.4C1456.0 430.8 1466.3 440.3 1473.9 447.0C1481.5 453.7 1488.5 460.4 1492.8 465.8C1497.1 471.2 1498.4 477.1 1499.5 479.3L1495.5 473.9C1491.0 470.3 1477.5 458.7 1468.5 452.4C1459.5 446.1 1450.6 440.3 1441.6 436.2C1432.6 432.1 1422.8 429.3 1414.7 427.6C1406.6 425.9 1400.7 425.5 1393.1 426.0C1385.5 426.5 1377.0 427.8 1368.9 430.8C1360.8 433.9 1351.8 438.9 1344.6 444.3C1337.4 449.7 1330.7 457.9 1325.8 463.1C1320.9 468.3 1316.8 473.3 1315.0 475.3ZM1358.1 496.8C1360.8 495.4 1368.5 490.8 1374.3 488.7C1380.1 486.6 1387.3 484.1 1393.1 484.1C1398.9 484.1 1403.9 486.1 1409.3 488.7C1414.7 491.3 1420.0 495.2 1425.4 499.5C1430.8 503.8 1436.9 509.1 1441.6 514.3C1446.3 519.5 1451.7 527.8 1453.7 530.5L1447.0 523.7C1444.3 521.2 1436.2 513.2 1430.8 508.9C1425.4 504.6 1420.5 501.0 1414.7 498.1C1408.9 495.2 1402.1 492.3 1395.8 491.4C1389.5 490.5 1383.3 491.8 1377.0 492.8C1370.7 493.8 1361.2 496.8 1358.1 497.6ZM1248.2 774.5C1252.5 775.1 1265.1 778.1 1274.2 778.3C1283.3 778.4 1293.4 777.6 1303.0 775.4C1312.6 773.2 1322.2 769.9 1331.8 765.3C1341.4 760.7 1352.7 753.3 1360.7 748.0C1368.7 742.7 1373.1 739.6 1380.0 733.6C1386.9 727.6 1398.3 715.4 1402.0 711.8L1395.0 725.0C1392.5 727.9 1386.8 735.4 1380.0 742.2C1373.2 749.0 1362.3 759.8 1354.0 765.9C1345.7 772.0 1336.1 776.0 1330.0 779.0C1323.9 782.0 1323.8 782.0 1317.4 784.0C1311.0 786.0 1299.2 789.7 1291.5 790.7C1283.8 791.7 1274.7 789.9 1271.3 789.8Z" stroke-width="7"/>
<path d="M1329.0 341.6C1325.6 342.6 1317.0 343.8 1308.8 347.4C1300.6 351.0 1289.1 356.5 1280.0 363.0C1270.9 369.5 1262.2 377.6 1254.0 386.3C1245.8 395.0 1237.7 405.4 1231.0 415.0C1224.3 424.6 1218.9 433.9 1213.6 444.0C1208.3 454.1 1203.5 464.6 1199.2 475.7C1194.9 486.8 1190.8 498.8 1187.7 510.3C1184.6 521.9 1182.5 533.5 1180.5 545.0C1178.5 556.5 1177.4 567.0 1176.0 579.5C1174.6 592.0 1172.7 609.9 1172.0 620.0C1171.3 630.1 1171.0 632.5 1172.0 640.0C1173.0 647.5 1175.5 656.3 1178.0 665.0C1180.5 673.7 1183.5 683.2 1187.0 692.0C1190.5 700.8 1194.3 709.5 1199.0 718.0C1203.7 726.5 1208.8 735.0 1215.0 743.0C1221.2 751.0 1228.5 759.0 1236.0 766.0C1243.5 773.0 1251.5 779.3 1260.0 785.0C1268.5 790.7 1278.0 796.0 1287.0 800.0C1296.0 804.0 1304.8 806.8 1314.0 809.0C1323.2 811.2 1333.3 812.7 1342.0 813.0C1350.7 813.3 1356.8 812.7 1366.0 811.0C1375.2 809.3 1386.8 807.0 1397.0 803.0C1407.2 799.0 1417.7 793.0 1427.0 787.0C1436.3 781.0 1445.0 774.5 1453.0 767.0C1461.0 759.5 1468.5 750.7 1475.0 742.0C1481.5 733.3 1487.0 724.0 1492.0 715.0C1497.0 706.0 1501.3 697.0 1505.0 688.0C1508.7 679.0 1511.7 669.0 1514.0 661.0C1516.3 653.0 1518.2 643.5 1519.0 640.0" stroke-width="6"/>
<path d="M1355.4 343.3C1360.8 344.0 1377.8 344.9 1387.7 347.3C1397.6 349.8 1405.7 353.1 1414.7 358.0C1423.7 362.9 1432.6 369.4 1441.6 377.0C1450.6 384.6 1460.4 394.5 1468.5 403.9C1476.6 413.3 1483.7 423.2 1490.0 433.5C1496.3 443.8 1501.7 455.5 1506.2 465.8C1510.7 476.1 1513.9 484.3 1517.0 495.5C1520.1 506.7 1523.7 526.8 1525.0 533.0" stroke-width="9"/>
<path d="M1499.0 490.0C1495.0 485.3 1484.0 469.8 1475.0 462.0C1466.0 454.2 1455.0 447.5 1445.0 443.0C1435.0 438.5 1425.0 436.2 1415.0 435.0C1405.0 433.8 1395.0 433.8 1385.0 436.0C1375.0 438.2 1364.2 442.0 1355.0 448.0C1345.8 454.0 1336.7 463.3 1330.0 472.0C1323.3 480.7 1319.0 489.5 1315.0 500.0C1311.0 510.5 1307.7 524.2 1306.0 535.0C1304.3 545.8 1304.0 555.0 1305.0 565.0C1306.0 575.0 1308.7 585.8 1312.0 595.0C1315.3 604.2 1319.5 612.5 1325.0 620.0C1330.5 627.5 1341.7 636.7 1345.0 640.0" stroke-width="6"/>
<path d="M1358.0 690.0C1353.3 692.0 1340.2 699.0 1330.0 702.0C1319.8 705.0 1307.8 707.7 1297.0 708.0C1286.2 708.3 1275.3 707.0 1265.0 704.0C1254.7 701.0 1244.2 696.2 1235.0 690.0C1225.8 683.8 1217.5 676.2 1210.0 667.0C1202.5 657.8 1195.7 646.2 1190.0 635.0C1184.3 623.8 1178.3 605.8 1176.0 600.0" stroke-width="3"/>
<path d="M1343.0 650.0C1338.3 650.0 1323.8 652.3 1315.0 650.0C1306.2 647.7 1297.8 642.0 1290.0 636.0C1282.2 630.0 1274.3 622.5 1268.0 614.0C1261.7 605.5 1256.2 595.7 1252.0 585.0C1247.8 574.3 1244.8 562.5 1243.0 550.0C1241.2 537.5 1240.7 523.3 1241.0 510.0C1241.3 496.7 1242.5 483.0 1245.0 470.0C1247.5 457.0 1251.3 443.7 1256.0 432.0C1260.7 420.3 1266.3 410.3 1273.0 400.0C1279.7 389.7 1287.3 378.8 1296.0 370.0C1304.7 361.2 1320.2 350.8 1325.0 347.0" stroke-width="4"/>
<path d="M1405.0 715.0C1401.7 719.5 1393.3 733.2 1385.0 742.0C1376.7 750.8 1365.5 760.5 1355.0 768.0C1344.5 775.5 1332.5 782.5 1322.0 787.0C1311.5 791.5 1301.5 794.0 1292.0 795.0C1282.5 796.0 1273.7 795.8 1265.0 793.0C1256.3 790.2 1244.2 780.5 1240.0 778.0" stroke-width="3"/>
<path d="M1455.0 540.0C1452.2 536.3 1444.7 524.3 1438.0 518.0C1431.3 511.7 1422.7 505.7 1415.0 502.0C1407.3 498.3 1399.5 496.3 1392.0 496.0C1384.5 495.7 1376.7 497.3 1370.0 500.0C1363.3 502.7 1356.7 506.7 1352.0 512.0C1347.3 517.3 1344.0 524.8 1342.0 532.0C1340.0 539.2 1339.0 547.0 1340.0 555.0C1341.0 563.0 1344.3 572.5 1348.0 580.0C1351.7 587.5 1359.7 596.7 1362.0 600.0" stroke-width="7"/>
<path d="M1440.0 640.0C1437.5 645.8 1431.7 664.2 1425.0 675.0C1418.3 685.8 1406.7 697.5 1400.0 705.0C1393.3 712.5 1387.5 717.5 1385.0 720.0" stroke-width="4"/>
<path d="M1500.0 645.0C1498.3 651.7 1495.0 672.5 1490.0 685.0C1485.0 697.5 1477.0 709.5 1470.0 720.0C1463.0 730.5 1451.7 743.3 1448.0 748.0" stroke-width="3"/>
<ellipse cx="1338" cy="583" rx="40" ry="88" fill="#030303" stroke="none" filter="url(#bl2)" transform="rotate(-8 1338 583)"/>
</g>
<path d="M985 232.5L1050 247.5L1118 263.5L1180 277.5L1237 291.5L1295 303L1295 326L1217 320.5L1130 313L1050 306.5L985 301Z" fill="url(#m3)" mask="url(#pm)"/>
<path d="M1480.2 638.5C1479.6 646.1 1479.2 669.0 1476.6 684.0C1474.0 699.0 1466.6 721.2 1464.6 728.6" fill="none" stroke="#e8e8ee" stroke-width="0.9"/>
<path d="M1378 531.9 L1621.7 538.1 L1615.4 648.6 L1402 627.8 C1376 622.5 1353.5 605 1353.5 578 C1353.5 554 1364 537 1378 531.9Z" fill="url(#m2)" stroke="#101010" stroke-width="1"/>
<path d="M1378 531.9 L1621.7 538.1 L1615.4 648.6 L1402 627.8 C1376 622.5 1353.5 605 1353.5 578 C1353.5 554 1364 537 1378 531.9Z" fill="url(#cg)"/>
<ellipse cx="1615" cy="593.8" rx="37" ry="55.6" fill="#06061e" stroke="#050505" stroke-width="2.5"/>
<g stroke="#1a1aff" stroke-width="1.2"><path d="M1635 543.75L1677 546"/><path d="M1653 548L1694.6 551.5"/><path d="M1630 555L1672 557"/><path d="M1663 560.4L1701 562.5"/><path d="M1660 563L1702 567"/><path d="M1667.5 571L1709 573"/><path d="M1668.5 582L1711 585.4"/><path d="M1599 582L1640 584"/><path d="M1609 591L1650 594"/><path d="M1666 601L1708 604.8"/><path d="M1666 606L1706 609"/><path d="M1620 608L1662 611.5"/><path d="M1642 618.75L1684 622"/><path d="M1657.7 634.4L1700 637.5"/><path d="M1618 640L1660 643"/></g>
<g fill="#0c0cc8"><path d="M1618.5 543.75L1635 536.5L1635 551Z"/><path d="M1636 548L1653 541.7L1653 555Z"/><path d="M1590 555.8L1607 548L1607 570Z"/><path d="M1612 556L1630 549L1630 562.5Z"/><path d="M1642.5 559L1660 553L1660 569Z"/><path d="M1651 571L1666.5 562.5L1666.5 576Z"/><path d="M1582 581L1599 575L1599 587.5Z"/><path d="M1623.75 581L1641.5 574L1641.5 588.5Z"/><path d="M1642.5 581.7L1658 576L1658 588.5Z"/><path d="M1657 581.7L1668.5 575L1668.5 590.6Z"/><path d="M1593.5 590L1609 584.4L1609 599Z"/><path d="M1636 599L1653 592.7L1653 606.25Z"/><path d="M1651 602L1666 594.8L1666 612.5Z"/><path d="M1603 608L1620 601L1620 616.25Z"/><path d="M1625 617.7L1642 611.5L1642 626Z"/><path d="M1640.4 633L1657.7 626.5L1657.7 640.6Z"/><path d="M1600 637.5L1618 631.7L1618 646.9Z"/></g>
<ellipse cx="978.6" cy="266.4" rx="19" ry="36.6" fill="#050000"/><ellipse cx="980.5" cy="266.4" rx="16" ry="34" fill="url(#m4)"/>
<g stroke="#ff1010" stroke-width="1.3">
<path d="M931 223.75L976 227.8"/>
<path d="M935 231.5L969 234.6"/>
<path d="M927.5 241.75L991 247.5"/>
<path d="M916 252.5L993 259.4"/>
<path d="M942 247.5L981 251.0"/>
<path d="M949 252.0L979 254.7"/>
<path d="M941 261.5L985 265.5"/>
<path d="M922.5 267.5L979 272.6"/>
<path d="M947.5 276.25L974 278.6"/>
<path d="M931 286.0L968 289.3"/>
<path d="M922 293.0L970 297.3"/>
<path d="M934 282.5L980 286.6"/>
<path d="M938 270.5L969 273.3"/>
<path d="M918 258.5L988 264.8"/>
</g>
<g fill="#8c0000"><path d="M910 222.5L931 217.5L931 230Z"/><path d="M907.5 231L935 224L935 239Z"/><path d="M904 241L927.5 234L927.5 249.5Z"/><path d="M895.6 250L916 245L916 260Z"/><path d="M922.5 247.5L942 237.5L942 257.5Z"/><path d="M929 252.5L949 244L949 260Z"/><path d="M910 261L941 254L941 269Z"/><path d="M902 267L922.5 260L922.5 275Z"/><path d="M911 279L947.5 267.5L947.5 285Z"/><path d="M906 285.6L931 280L931 292Z"/><path d="M898.4 292L922 283L922 303Z"/><path d="M908.5 283L934 274L934 291Z"/><path d="M915 270L938 262L938 279Z"/><path d="M900 258L918 251L918 266Z"/></g>
<circle cx="1805.6" cy="770.4" r="4.5" fill="url(#cy)"/>
<text x="1840" y="762" text-anchor="middle" font-family="Liberation Sans,sans-serif" font-size="12" fill="#14d214">Y</text>
<path d="M1840.6 781V766" stroke="#22cc22" stroke-width="3"/><path d="M1840.6 759.5L1844.6 770H1836.6Z" fill="#22cc22"/>
<ellipse cx="1840.4" cy="785.5" rx="4.5" ry="3" fill="#1fa61f"/><ellipse cx="1840" cy="808" rx="4.5" ry="3" fill="#1fa61f"/>
<path d="M1826 785.6L1839.4 786V807.5L1825.6 806Z" fill="#a9a9a9" stroke="#777" stroke-width="0.6"/><path d="M1839.4 786L1855 786.5L1854.75 807.5H1839.4Z" fill="#8c8c8c" stroke="#555" stroke-width="0.6"/>
<text x="1803.5" y="801.5" font-family="Liberation Sans,sans-serif" font-size="12" fill="#ff1a1a">X</text><text x="1814" y="801" font-family="Liberation Sans,sans-serif" font-size="11" fill="#1a1aff">Z</text>
<ellipse cx="1823" cy="796.5" rx="4" ry="3" fill="#10109a"/>
<path d="M1810.6 796.5L1820 793V795H1830V798H1820V800Z" fill="#a01414"/>
<ellipse cx="1831.9" cy="796.5" rx="3.6" ry="4.6" fill="#e01818"/><circle cx="1847.9" cy="796.5" r="4" fill="#1818b8"/>
<g fill="#fff" stroke="#444" stroke-width="0.8" stroke-linejoin="round"><path d="M1877 823.5Q1885 812 1886.5 805L1882 806L1887.2 796L1890.5 807.5L1888 806.5Q1886 815 1879 825Z"/><path d="M1868 833Q1860 838 1850 840.5L1849.5 838L1840 843.5L1851 846L1850.5 843.5Q1861 840.5 1869 835Z"/></g>
<text x="1342" y="182" text-anchor="middle" font-family="Liberation Mono,monospace" font-weight="bold" font-size="13" fill="#111">Mesh</text>
<path d="M1900.5 174.5L1909.5 183.5M1909.5 174.5L1900.5 183.5" stroke="#111" stroke-width="1.6"/>
<g transform="translate(770,169)"><rect width="16" height="16" fill="#2f6fe0"/><path d="M7 0 L12 0 L16 12 L16 16 L10 16 Z" fill="#4a90f0"/><path d="M11 0H16V11Z" fill="#5aa8ff"/><text x="5" y="12" font-family="Liberation Sans,sans-serif" font-weight="bold" font-size="9" fill="#fff">F</text></g>
</svg>
<svg class="abs" style="left:736px;top:171px" width="16" height="4"><rect x="0" y="0" width="1" height="1" fill="#c3c3c3"/><rect x="2" y="0" width="1" height="1" fill="#c3c3c3"/><rect x="4" y="0" width="1" height="1" fill="#c3c3c3"/><rect x="6" y="0" width="1" height="1" fill="#c3c3c3"/><rect x="8" y="0" width="1" height="1" fill="#c3c3c3"/><rect x="10" y="0" width="1" height="1" fill="#c3c3c3"/><rect x="12" y="0" width="1" height="1" fill="#c3c3c3"/><rect x="14" y="0" width="1" height="1" fill="#c3c3c3"/><rect x="0" y="2" width="1" height="1" fill="#c3c3c3"/><rect x="2" y="2" width="1" height="1" fill="#c3c3c3"/><rect x="4" y="2" width="1" height="1" fill="#c3c3c3"/><rect x="6" y="2" width="1" height="1" fill="#c3c3c3"/><rect x="8" y="2" width="1" height="1" fill="#c3c3c3"/><rect x="10" y="2" width="1" height="1" fill="#c3c3c3"/><rect x="12" y="2" width="1" height="1" fill="#c3c3c3"/><rect x="14" y="2" width="1" height="1" fill="#c3c3c3"/></svg>
<svg class="abs" style="left:736px;top:258px" width="16" height="4"><rect x="0" y="0" width="1" height="1" fill="#c3c3c3"/><rect x="2" y="0" width="1" height="1" fill="#c3c3c3"/><rect x="4" y="0" width="1" height="1" fill="#c3c3c3"/><rect x="6" y="0" width="1" height="1" fill="#c3c3c3"/><rect x="8" y="0" width="1" height="1" fill="#c3c3c3"/><rect x="10" y="0" width="1" height="1" fill="#c3c3c3"/><rect x="12" y="0" width="1" height="1" fill="#c3c3c3"/><rect x="14" y="0" width="1" height="1" fill="#c3c3c3"/><rect x="0" y="2" width="1" height="1" fill="#c3c3c3"/><rect x="2" y="2" width="1" height="1" fill="#c3c3c3"/><rect x="4" y="2" width="1" height="1" fill="#c3c3c3"/><rect x="6" y="2" width="1" height="1" fill="#c3c3c3"/><rect x="8" y="2" width="1" height="1" fill="#c3c3c3"/><rect x="10" y="2" width="1" height="1" fill="#c3c3c3"/><rect x="12" y="2" width="1" height="1" fill="#c3c3c3"/><rect x="14" y="2" width="1" height="1" fill="#c3c3c3"/></svg>
<svg class="abs" style="left:736px;top:314px" width="16" height="4"><rect x="0" y="0" width="1" height="1" fill="#c3c3c3"/><rect x="2" y="0" width="1" height="1" fill="#c3c3c3"/><rect x="4" y="0" width="1" height="1" fill="#c3c3c3"/><rect x="6" y="0" width="1" height="1" fill="#c3c3c3"/><rect x="8" y="0" width="1" height="1" fill="#c3c3c3"/><rect x="10" y="0" width="1" height="1" fill="#c3c3c3"/><rect x="12" y="0" width="1" height="1" fill="#c3c3c3"/><rect x="14" y="0" width="1" height="1" fill="#c3c3c3"/><rect x="0" y="2" width="1" height="1" fill="#c3c3c3"/><rect x="2" y="2" width="1" height="1" fill="#c3c3c3"/><rect x="4" y="2" width="1" height="1" fill="#c3c3c3"/><rect x="6" y="2" width="1" height="1" fill="#c3c3c3"/><rect x="8" y="2" width="1" height="1" fill="#c3c3c3"/><rect x="10" y="2" width="1" height="1" fill="#c3c3c3"/><rect x="12" y="2" width="1" height="1" fill="#c3c3c3"/><rect x="14" y="2" width="1" height="1" fill="#c3c3c3"/></svg>
<svg class="abs" style="left:736px;top:330px" width="16" height="4"><rect x="0" y="0" width="1" height="1" fill="#c3c3c3"/><rect x="2" y="0" width="1" height="1" fill="#c3c3c3"/><rect x="4" y="0" width="1" height="1" fill="#c3c3c3"/><rect x="6" y="0" width="1" height="1" fill="#c3c3c3"/><rect x="8" y="0" width="1" height="1" fill="#c3c3c3"/><rect x="10" y="0" width="1" height="1" fill="#c3c3c3"/><rect x="12" y="0" width="1" height="1" fill="#c3c3c3"/><rect x="14" y="0" width="1" height="1" fill="#c3c3c3"/><rect x="0" y="2" width="1" height="1" fill="#c3c3c3"/><rect x="2" y="2" width="1" height="1" fill="#c3c3c3"/><rect x="4" y="2" width="1" height="1" fill="#c3c3c3"/><rect x="6" y="2" width="1" height="1" fill="#c3c3c3"/><rect x="8" y="2" width="1" height="1" fill="#c3c3c3"/><rect x="10" y="2" width="1" height="1" fill="#c3c3c3"/><rect x="12" y="2" width="1" height="1" fill="#c3c3c3"/><rect x="14" y="2" width="1" height="1" fill="#c3c3c3"/></svg>
<svg class="abs" style="left:736px;top:378px" width="16" height="4"><rect x="0" y="0" width="1" height="1" fill="#c3c3c3"/><rect x="2" y="0" width="1" height="1" fill="#c3c3c3"/><rect x="4" y="0" width="1" height="1" fill="#c3c3c3"/><rect x="6" y="0" width="1" height="1" fill="#c3c3c3"/><rect x="8" y="0" width="1" height="1" fill="#c3c3c3"/><rect x="10" y="0" width="1" height="1" fill="#c3c3c3"/><rect x="12" y="0" width="1" height="1" fill="#c3c3c3"/><rect x="14" y="0" width="1" height="1" fill="#c3c3c3"/><rect x="0" y="2" width="1" height="1" fill="#c3c3c3"/><rect x="2" y="2" width="1" height="1" fill="#c3c3c3"/><rect x="4" y="2" width="1" height="1" fill="#c3c3c3"/><rect x="6" y="2" width="1" height="1" fill="#c3c3c3"/><rect x="8" y="2" width="1" height="1" fill="#c3c3c3"/><rect x="10" y="2" width="1" height="1" fill="#c3c3c3"/><rect x="12" y="2" width="1" height="1" fill="#c3c3c3"/><rect x="14" y="2" width="1" height="1" fill="#c3c3c3"/></svg>
<svg class="abs" style="left:736px;top:429px" width="16" height="4"><rect x="0" y="0" width="1" height="1" fill="#c3c3c3"/><rect x="2" y="0" width="1" height="1" fill="#c3c3c3"/><rect x="4" y="0" width="1" height="1" fill="#c3c3c3"/><rect x="6" y="0" width="1" height="1" fill="#c3c3c3"/><rect x="8" y="0" width="1" height="1" fill="#c3c3c3"/><rect x="10" y="0" width="1" height="1" fill="#c3c3c3"/><rect x="12" y="0" width="1" height="1" fill="#c3c3c3"/><rect x="14" y="0" width="1" height="1" fill="#c3c3c3"/><rect x="0" y="2" width="1" height="1" fill="#c3c3c3"/><rect x="2" y="2" width="1" height="1" fill="#c3c3c3"/><rect x="4" y="2" width="1" height="1" fill="#c3c3c3"/><rect x="6" y="2" width="1" height="1" fill="#c3c3c3"/><rect x="8" y="2" width="1" height="1" fill="#c3c3c3"/><rect x="10" y="2" width="1" height="1" fill="#c3c3c3"/><rect x="12" y="2" width="1" height="1" fill="#c3c3c3"/><rect x="14" y="2" width="1" height="1" fill="#c3c3c3"/></svg>
<svg class="abs" style="left:736px;top:483px" width="16" height="4"><rect x="0" y="0" width="1" height="1" fill="#c3c3c3"/><rect x="2" y="0" width="1" height="1" fill="#c3c3c3"/><rect x="4" y="0" width="1" height="1" fill="#c3c3c3"/><rect x="6" y="0" width="1" height="1" fill="#c3c3c3"/><rect x="8" y="0" width="1" height="1" fill="#c3c3c3"/><rect x="10" y="0" width="1" height="1" fill="#c3c3c3"/><rect x="12" y="0" width="1" height="1" fill="#c3c3c3"/><rect x="14" y="0" width="1" height="1" fill="#c3c3c3"/><rect x="0" y="2" width="1" height="1" fill="#c3c3c3"/><rect x="2" y="2" width="1" height="1" fill="#c3c3c3"/><rect x="4" y="2" width="1" height="1" fill="#c3c3c3"/><rect x="6" y="2" width="1" height="1" fill="#c3c3c3"/><rect x="8" y="2" width="1" height="1" fill="#c3c3c3"/><rect x="10" y="2" width="1" height="1" fill="#c3c3c3"/><rect x="12" y="2" width="1" height="1" fill="#c3c3c3"/><rect x="14" y="2" width="1" height="1" fill="#c3c3c3"/></svg>
<svg class="abs" style="left:736px;top:533px" width="16" height="4"><rect x="0" y="0" width="1" height="1" fill="#c3c3c3"/><rect x="2" y="0" width="1" height="1" fill="#c3c3c3"/><rect x="4" y="0" width="1" height="1" fill="#c3c3c3"/><rect x="6" y="0" width="1" height="1" fill="#c3c3c3"/><rect x="8" y="0" width="1" height="1" fill="#c3c3c3"/><rect x="10" y="0" width="1" height="1" fill="#c3c3c3"/><rect x="12" y="0" width="1" height="1" fill="#c3c3c3"/><rect x="14" y="0" width="1" height="1" fill="#c3c3c3"/><rect x="0" y="2" width="1" height="1" fill="#c3c3c3"/><rect x="2" y="2" width="1" height="1" fill="#c3c3c3"/><rect x="4" y="2" width="1" height="1" fill="#c3c3c3"/><rect x="6" y="2" width="1" height="1" fill="#c3c3c3"/><rect x="8" y="2" width="1" height="1" fill="#c3c3c3"/><rect x="10" y="2" width="1" height="1" fill="#c3c3c3"/><rect x="12" y="2" width="1" height="1" fill="#c3c3c3"/><rect x="14" y="2" width="1" height="1" fill="#c3c3c3"/></svg>
<svg class="abs" style="left:736px;top:583px" width="16" height="4"><rect x="0" y="0" width="1" height="1" fill="#c3c3c3"/><rect x="2" y="0" width="1" height="1" fill="#c3c3c3"/><rect x="4" y="0" width="1" height="1" fill="#c3c3c3"/><rect x="6" y="0" width="1" height="1" fill="#c3c3c3"/><rect x="8" y="0" width="1" height="1" fill="#c3c3c3"/><rect x="10" y="0" width="1" height="1" fill="#c3c3c3"/><rect x="12" y="0" width="1" height="1" fill="#c3c3c3"/><rect x="14" y="0" width="1" height="1" fill="#c3c3c3"/><rect x="0" y="2" width="1" height="1" fill="#c3c3c3"/><rect x="2" y="2" width="1" height="1" fill="#c3c3c3"/><rect x="4" y="2" width="1" height="1" fill="#c3c3c3"/><rect x="6" y="2" width="1" height="1" fill="#c3c3c3"/><rect x="8" y="2" width="1" height="1" fill="#c3c3c3"/><rect x="10" y="2" width="1" height="1" fill="#c3c3c3"/><rect x="12" y="2" width="1" height="1" fill="#c3c3c3"/><rect x="14" y="2" width="1" height="1" fill="#c3c3c3"/></svg>
<div class="abs" style="left:726px;top:180px;width:33px;height:33px;border:3px solid #8b97a4;border-radius:5px;background:#fdfdfd"><div class="abs" style="left:2.5px;top:2.5px"><svg width="22" height="22" viewBox="0 0 22 22" fill="none" stroke-linecap="round" stroke-linejoin="round"><path d="M4 3L13 6V14L4 17.5Z" fill="#1a1a1a"/><path d="M7 4V16.5M10 5V15.3M4 8L13 9.2M4 12.7L13 11.8" stroke="#d4960a" stroke-width="0.8"/><path d="M13.5 10.5H16M13.5 12.5H18M11 14.8H20M4.5 18H20.5" stroke="#d4960a" stroke-width="1"/></svg></div></div>
<div class="abs" style="left:726px;top:218px;width:29px;height:29px;border:1px solid #9aa5b1;border-radius:4px;background:#fdfdfd"><div class="abs" style="left:2.5px;top:2.5px"><svg width="22" height="22" viewBox="0 0 22 22" fill="none" stroke-linecap="round" stroke-linejoin="round"><path d="M2.5 3.5H19.5L11 16.5Z" stroke="#1a1a1a" stroke-width="1.4" stroke-dasharray="0.1 2.1"/><circle cx="11" cy="8.2" r="2.7" stroke="#d4960a" stroke-width="1.1"/><path d="M11 8.2V11M11 8.2L8.8 6.8M11 8.2L13.2 6.8M11 11V13.5M8.3 6L7 5M13.7 6L15 5" stroke="#d4960a" stroke-width="1"/></svg></div></div>
<div class="abs" style="left:726px;top:268px;width:33px;height:33px;border:3px solid #8b97a4;border-radius:5px;background:#fdfdfd"><div class="abs" style="left:2.5px;top:2.5px"><svg width="22" height="22" viewBox="0 0 22 22" fill="none" stroke-linecap="round" stroke-linejoin="round"><rect x="3" y="5" width="6" height="12" fill="#b9b9b9"/><path d="M9 5L6 6.5V18L9 17Z" fill="#d4960a"/><path d="M13 8.5H20M13 13.5H20M15 6.5L13 8.5L15 10.5M15 11.5L13 13.5L15 15.5" stroke="#666" stroke-width="1.2"/></svg></div></div>
<div class="abs" style="left:726px;top:339px;width:29px;height:29px;border:1px solid #9aa5b1;border-radius:4px;background:#fdfdfd"><div class="abs" style="left:2.5px;top:2.5px"><svg width="22" height="22" viewBox="0 0 22 22" fill="none" stroke-linecap="round" stroke-linejoin="round"><path d="M11 3L18.5 6.5V15L11 19L3.5 15V6.5Z M3.5 6.5L11 10.5L18.5 6.5M11 10.5V19" stroke="#1a1a1a" stroke-width="1.1"/><path d="M11 3V10.5M3.5 15L11 10.5L18.5 15" stroke="#1a1a1a" stroke-width="0.9" stroke-dasharray="1 1.6"/></svg></div></div>
<div class="abs" style="left:726px;top:389px;width:29px;height:29px;border:1px solid #9aa5b1;border-radius:4px;background:#fdfdfd"><div class="abs" style="left:2.5px;top:2.5px"><svg width="22" height="22" viewBox="0 0 22 22" fill="none" stroke-linecap="round" stroke-linejoin="round"><rect x="2" y="8.5" width="18" height="4.5" rx="2.2" stroke="#777" stroke-width="1" fill="#fff"/><rect x="2" y="8.5" width="11" height="4.5" rx="2.2" fill="#d4960a"/></svg></div></div>
<div class="abs" style="left:726px;top:439px;width:33px;height:33px;border:3px solid #8b97a4;border-radius:5px;background:#fdfdfd"><div class="abs" style="left:2.5px;top:2.5px"><svg width="22" height="22" viewBox="0 0 22 22" fill="none" stroke-linecap="round" stroke-linejoin="round"><path d="M5 4V17H18" stroke="#1a1a1a" stroke-width="1.4"/><path d="M5 17L15 8" stroke="#1a1a1a" stroke-width="1.3"/><path d="M3.3 6L5 3L6.7 6Z M16.5 15.3L19.5 17L16.5 18.7Z M13 7.5L16.3 6.7L15.5 10Z" fill="#d4960a"/></svg></div></div>
<div class="abs" style="left:726px;top:493px;width:29px;height:29px;border:1px solid #9aa5b1;border-radius:4px;background:#fdfdfd"><div class="abs" style="left:2.5px;top:2.5px"><svg width="22" height="22" viewBox="0 0 22 22" fill="none" stroke-linecap="round" stroke-linejoin="round"><path d="M3.5 3.5H15L18.5 7V18.5H3.5Z" stroke="#1a1a1a" stroke-width="1.3"/><path d="M7 8H13" stroke="#d4960a" stroke-width="1.5"/><path d="M7 11.5H14M7 15H12" stroke="#1a1a1a" stroke-width="1.3"/></svg></div></div>
<div class="abs" style="left:726px;top:543px;width:29px;height:29px;border:1px solid #9aa5b1;border-radius:4px;background:#fdfdfd"><div class="abs" style="left:2.5px;top:2.5px"><svg width="22" height="22" viewBox="0 0 22 22" fill="none" stroke-linecap="round" stroke-linejoin="round"><path d="M2.5 8L8 2.5H19.5V14L14 19.5H2.5Z" fill="#d4960a" stroke="#1a1a1a" stroke-width="1.2"/><rect x="8" y="2.5" width="11.5" height="11.5" fill="#fff" stroke="#1a1a1a" stroke-width="1.1"/><path d="M8 8H14V14" stroke="#1a1a1a" stroke-width="1" stroke-dasharray="1.2 1.2"/></svg></div></div>
<div class="abs" style="left:726px;top:593px;width:29px;height:29px;border:1px solid #9aa5b1;border-radius:4px;background:#fdfdfd"><div class="abs" style="left:2.5px;top:2.5px"><svg width="22" height="22" viewBox="0 0 22 22" fill="none" stroke-linecap="round" stroke-linejoin="round"><path d="M4 15V3.5H15" stroke="#1a1a1a" stroke-width="2"/><rect x="7.5" y="6.5" width="10" height="12" stroke="#d4960a" stroke-width="1.3"/></svg></div></div>
<svg class="abs" style="left:726px;top:879px" width="4" height="16"><rect x="0" y="0" width="1" height="1" fill="#c3c3c3"/><rect x="2" y="0" width="1" height="1" fill="#c3c3c3"/><rect x="0" y="2" width="1" height="1" fill="#c3c3c3"/><rect x="2" y="2" width="1" height="1" fill="#c3c3c3"/><rect x="0" y="4" width="1" height="1" fill="#c3c3c3"/><rect x="2" y="4" width="1" height="1" fill="#c3c3c3"/><rect x="0" y="6" width="1" height="1" fill="#c3c3c3"/><rect x="2" y="6" width="1" height="1" fill="#c3c3c3"/><rect x="0" y="8" width="1" height="1" fill="#c3c3c3"/><rect x="2" y="8" width="1" height="1" fill="#c3c3c3"/><rect x="0" y="10" width="1" height="1" fill="#c3c3c3"/><rect x="2" y="10" width="1" height="1" fill="#c3c3c3"/><rect x="0" y="12" width="1" height="1" fill="#c3c3c3"/><rect x="2" y="12" width="1" height="1" fill="#c3c3c3"/><rect x="0" y="14" width="1" height="1" fill="#c3c3c3"/><rect x="2" y="14" width="1" height="1" fill="#c3c3c3"/></svg>
<svg class="abs" style="left:950px;top:879px" width="4" height="16"><rect x="0" y="0" width="1" height="1" fill="#c3c3c3"/><rect x="2" y="0" width="1" height="1" fill="#c3c3c3"/><rect x="0" y="2" width="1" height="1" fill="#c3c3c3"/><rect x="2" y="2" width="1" height="1" fill="#c3c3c3"/><rect x="0" y="4" width="1" height="1" fill="#c3c3c3"/><rect x="2" y="4" width="1" height="1" fill="#c3c3c3"/><rect x="0" y="6" width="1" height="1" fill="#c3c3c3"/><rect x="2" y="6" width="1" height="1" fill="#c3c3c3"/><rect x="0" y="8" width="1" height="1" fill="#c3c3c3"/><rect x="2" y="8" width="1" height="1" fill="#c3c3c3"/><rect x="0" y="10" width="1" height="1" fill="#c3c3c3"/><rect x="2" y="10" width="1" height="1" fill="#c3c3c3"/><rect x="0" y="12" width="1" height="1" fill="#c3c3c3"/><rect x="2" y="12" width="1" height="1" fill="#c3c3c3"/><rect x="0" y="14" width="1" height="1" fill="#c3c3c3"/><rect x="2" y="14" width="1" height="1" fill="#c3c3c3"/></svg>
<svg class="abs" style="left:1101px;top:879px" width="4" height="16"><rect x="0" y="0" width="1" height="1" fill="#c3c3c3"/><rect x="2" y="0" width="1" height="1" fill="#c3c3c3"/><rect x="0" y="2" width="1" height="1" fill="#c3c3c3"/><rect x="2" y="2" width="1" height="1" fill="#c3c3c3"/><rect x="0" y="4" width="1" height="1" fill="#c3c3c3"/><rect x="2" y="4" width="1" height="1" fill="#c3c3c3"/><rect x="0" y="6" width="1" height="1" fill="#c3c3c3"/><rect x="2" y="6" width="1" height="1" fill="#c3c3c3"/><rect x="0" y="8" width="1" height="1" fill="#c3c3c3"/><rect x="2" y="8" width="1" height="1" fill="#c3c3c3"/><rect x="0" y="10" width="1" height="1" fill="#c3c3c3"/><rect x="2" y="10" width="1" height="1" fill="#c3c3c3"/><rect x="0" y="12" width="1" height="1" fill="#c3c3c3"/><rect x="2" y="12" width="1" height="1" fill="#c3c3c3"/><rect x="0" y="14" width="1" height="1" fill="#c3c3c3"/><rect x="2" y="14" width="1" height="1" fill="#c3c3c3"/></svg>
<svg class="abs" style="left:1151px;top:879px" width="4" height="16"><rect x="0" y="0" width="1" height="1" fill="#c3c3c3"/><rect x="2" y="0" width="1" height="1" fill="#c3c3c3"/><rect x="0" y="2" width="1" height="1" fill="#c3c3c3"/><rect x="2" y="2" width="1" height="1" fill="#c3c3c3"/><rect x="0" y="4" width="1" height="1" fill="#c3c3c3"/><rect x="2" y="4" width="1" height="1" fill="#c3c3c3"/><rect x="0" y="6" width="1" height="1" fill="#c3c3c3"/><rect x="2" y="6" width="1" height="1" fill="#c3c3c3"/><rect x="0" y="8" width="1" height="1" fill="#c3c3c3"/><rect x="2" y="8" width="1" height="1" fill="#c3c3c3"/><rect x="0" y="10" width="1" height="1" fill="#c3c3c3"/><rect x="2" y="10" width="1" height="1" fill="#c3c3c3"/><rect x="0" y="12" width="1" height="1" fill="#c3c3c3"/><rect x="2" y="12" width="1" height="1" fill="#c3c3c3"/><rect x="0" y="14" width="1" height="1" fill="#c3c3c3"/><rect x="2" y="14" width="1" height="1" fill="#c3c3c3"/></svg>
<div class="abs" style="left:735px;top:870px;width:33px;height:32px;border:3px solid #8b97a4;border-radius:5px;background:#fdfdfd"><div class="abs" style="left:2.5px;top:2px"><svg width="22" height="22" viewBox="0 0 22 22" fill="none" stroke-linecap="round" stroke-linejoin="round"><path d="M7 3L7 17L10.3 13.8L12.8 19L15 18L12.6 13L17 12.5Z" fill="#d4960a" stroke="#a87405" stroke-width="0.6"/></svg></div></div>
<div class="abs" style="left:773px;top:872px;width:29px;height:29px;border:1px solid #9aa5b1;border-radius:4px;background:#fdfdfd"><div class="abs" style="left:2.5px;top:2.5px"><svg width="22" height="22" viewBox="0 0 22 22" fill="none" stroke-linecap="round" stroke-linejoin="round"><path d="M4 9.5A7.2 7.2 0 0 1 17.5 8" stroke="#d4960a" stroke-width="1.2"/><path d="M18 12.5A7.2 7.2 0 0 1 4.5 14" stroke="#1a1a1a" stroke-width="1.2"/><path d="M15 8.5H18.5V5" stroke="#d4960a" stroke-width="1.3"/><path d="M7 13.5H3.5V17" stroke="#1a1a1a" stroke-width="1.3"/></svg></div></div>
<div class="abs" style="left:807px;top:872px;width:29px;height:29px;border:1px solid #9aa5b1;border-radius:4px;background:#fdfdfd"><div class="abs" style="left:2.5px;top:2.5px"><svg width="22" height="22" viewBox="0 0 22 22" fill="none" stroke-linecap="round" stroke-linejoin="round"><path d="M11 4V18M4 11H18" stroke="#d4960a" stroke-width="1.3" stroke-dasharray="2 1"/><path d="M9.3 5L11 2.5L12.7 5ZM9.3 17L11 19.5L12.7 17ZM5 9.3L2.5 11L5 12.7ZM17 9.3L19.5 11L17 12.7Z" fill="#1a1a1a" stroke="#1a1a1a" stroke-width="0.6"/></svg></div></div>
<div class="abs" style="left:841px;top:872px;width:29px;height:29px;border:1px solid #9aa5b1;border-radius:4px;background:#fdfdfd"><div class="abs" style="left:1.5px;top:2.5px"><svg width="24" height="22" viewBox="0 0 24 22" fill="none" stroke-linecap="round" stroke-linejoin="round"><circle cx="11.5" cy="10" r="5" stroke="#d4960a" stroke-width="1.3"/><path d="M15 13.5L18 17" stroke="#1a1a1a" stroke-width="1.5"/><path d="M1.5 10H5.5" stroke="#1a1a1a" stroke-width="1.4"/><path d="M18.5 9.5H22.5M20.5 7.5V11.5" stroke="#1a1a1a" stroke-width="1.3"/></svg></div></div>
<div class="abs" style="left:875px;top:872px;width:29px;height:29px;border:1px solid #9aa5b1;border-radius:4px;background:#fdfdfd"><div class="abs" style="left:2.5px;top:2.5px"><svg width="22" height="22" viewBox="0 0 22 22" fill="none" stroke-linecap="round" stroke-linejoin="round"><circle cx="10" cy="10" r="5.8" stroke="#d4960a" stroke-width="1.3"/><path d="M14.3 14.3L17.5 17.5" stroke="#1a1a1a" stroke-width="1.4"/></svg></div></div>
<div class="abs" style="left:909px;top:872px;width:29px;height:29px;border:1px solid #9aa5b1;border-radius:4px;background:#fdfdfd"><div class="abs" style="left:2.5px;top:2.5px"><svg width="22" height="22" viewBox="0 0 22 22" fill="none" stroke-linecap="round" stroke-linejoin="round"><circle cx="11" cy="11" r="7.6" stroke="#1a1a1a" stroke-width="1.2"/><path d="M11 10V15.5" stroke="#d4960a" stroke-width="1.8"/><circle cx="11" cy="6.8" r="1.1" fill="#d4960a"/></svg></div></div>
<div class="abs" style="left:959px;top:872px;width:29px;height:29px;border:1px solid #9aa5b1;border-radius:4px;background:#fdfdfd"><div class="abs" style="left:2.5px;top:2.5px"><svg width="22" height="22" viewBox="0 0 22 22" fill="none" stroke-linecap="round" stroke-linejoin="round"><circle cx="10" cy="10" r="6" stroke="#d4960a" stroke-width="1.2"/><path d="M14.5 14.5L17.8 17.8" stroke="#1a1a1a" stroke-width="1.4"/><rect x="7" y="7.5" width="6.5" height="5" stroke="#666" stroke-width="1"/></svg></div></div>
<div class="abs" style="left:993px;top:872px;width:29px;height:29px;border:1px solid #9aa5b1;border-radius:4px;background:#fdfdfd"><div class="abs" style="left:2.5px;top:2.5px"><svg width="22" height="22" viewBox="0 0 22 22" fill="none" stroke-linecap="round" stroke-linejoin="round"><circle cx="10" cy="10" r="6" stroke="#d4960a" stroke-width="1.2"/><path d="M14.5 14.5L17.8 17.8" stroke="#1a1a1a" stroke-width="1.4"/><path d="M7 10H13.5M9 8L7 10L9 12" stroke="#d4960a" stroke-width="1.2"/></svg></div></div>
<div class="abs" style="left:1027px;top:872px;width:29px;height:29px;border:1px solid #9aa5b1;border-radius:4px;background:#fdfdfd"><div class="abs" style="left:2.5px;top:2.5px"><svg width="22" height="22" viewBox="0 0 22 22" fill="none" stroke-linecap="round" stroke-linejoin="round"><path d="M11 3V12L4 18M11 12L18 18" stroke="#1a1a1a" stroke-width="1.5"/><circle cx="11" cy="3.5" r="1.3" fill="#d4960a"/><circle cx="4" cy="18" r="1.3" fill="#d4960a"/><circle cx="18" cy="18" r="1.3" fill="#d4960a"/><path d="M20.5 17V20.5H17Z" fill="#555"/></svg></div></div>
<div class="abs" style="left:1061px;top:872px;width:29px;height:29px;border:1px solid #9aa5b1;border-radius:4px;background:#fdfdfd"><div class="abs" style="left:2.5px;top:2.5px"><svg width="22" height="22" viewBox="0 0 22 22" fill="none" stroke-linecap="round" stroke-linejoin="round"><path d="M10 3.5H3.5V18.5H15L18.5 18.5V13" stroke="#1a1a1a" stroke-width="1.3"/><path d="M15 2.5V10M12.5 7.5L15 10.5L17.5 7.5" stroke="#d4960a" stroke-width="1.4"/></svg></div></div>
<div class="abs" style="left:1111px;top:872px;width:29px;height:29px;border:1px solid #9aa5b1;border-radius:4px;background:#fdfdfd"><div class="abs" style="left:1.5px;top:2.5px"><svg width="24" height="22" viewBox="0 0 24 22" fill="none" stroke-linecap="round" stroke-linejoin="round"><path d="M3 4.5H17M3 2.5V6.5M17 2.5V6.5" stroke="#1a1a1a" stroke-width="1.1"/><circle cx="10" cy="4.5" r="1.5" stroke="#1a1a1a" fill="#fff"/><circle cx="10" cy="13.5" r="3.6" stroke="#d4960a" stroke-width="1.6" stroke-dasharray="2 1.2"/><circle cx="10" cy="13.5" r="1.2" fill="#d4960a"/><circle cx="4.5" cy="9.5" r="1.6" stroke="#d4960a" stroke-width="1.1"/><path d="M20.5 14V19H15.5Z" fill="#1a1a1a"/></svg></div></div>
<div class="abs" style="left:1159px;top:876px;width:685px;height:23px;border:1px solid #a9b5c9;border-radius:4px;background:#fdfdfd"></div>
<div class="abs mono" style="left:1166px;top:879px;line-height:16px;margin-top:1px">all</div>
<div class="abs dd" style="left:1827px;top:885px;border-top-color:#555"></div>
<div class="abs mono" style="left:1846px;top:879px;line-height:16px;margin-top:1px">0 selected</div>
<div class="abs" style="left:720px;top:912px;width:1200px;height:128px;background:#bfc4cf"></div>
<div class="abs monob" style="left:729px;top:916px;line-height:16px;color:#5a6e8c;margin-top:1px">Console</div>
<div class="abs" style="left:720px;top:935px;width:1200px;height:99px;background:#f7f7f7;border-radius:3px 0 0 3px;overflow:hidden">
<div class="abs" style="left:4.5px;top:-11px;font-family:'Liberation Mono',monospace;font-size:13.33px;line-height:16px;white-space:pre;color:#111">Found new zone. Assigning default settings to interface_1_2 (type interface).</div>
<div class="abs" style="left:4.5px;top:5px;font-family:'Liberation Mono',monospace;font-size:13.33px;line-height:16px;white-space:pre;color:#111">Found new zone. Assigning default settings to interface_1_1 (type interface).</div>
<div class="abs" style="left:4.5px;top:21px;font-family:'Liberation Mono',monospace;font-size:13.33px;line-height:16px;white-space:pre;color:#111">Found new zone. Assigning default settings to interface_2_1 (type interface).</div>
<div class="abs" style="left:4.5px;top:37px;font-family:'Liberation Mono',monospace;font-size:13.33px;line-height:16px;white-space:pre;color:#111">Found new zone. Assigning default settings to wall_woke (type wall).</div>
<div class="abs" style="left:4.5px;top:53px;font-family:'Liberation Mono',monospace;font-size:13.33px;line-height:16px;white-space:pre;color:#111">Found new zone. Assigning default settings to interface_2_2 (type interface).</div>
</div>
<svg class="abs" style="left:1892px;top:917px" width="12" height="12" viewBox="0 0 12 12" fill="none"><rect x="0.6" y="0.6" width="10.8" height="10.8" rx="2" stroke="#444" stroke-width="0.9"/><rect x="2.6" y="4.6" width="4.6" height="4.6" rx="1" stroke="#444" stroke-width="0.9"/><path d="M4.8 4.4V3.6Q4.8 2.8 5.6 2.8H8.4Q9.2 2.8 9.2 3.6V6.4Q9.2 7.2 8.4 7.2H7.4" stroke="#444" stroke-width="0.9"/></svg>
<svg class="abs" style="left:1907px;top:917px" width="10" height="12" viewBox="0 0 10 12" fill="none"><path d="M7.5 2L3 6L7.5 10" stroke="#222" stroke-width="1.3"/></svg>
<div class="abs" style="left:1843px;top:935px;width:28px;height:24px;border:1px solid #b9b9b9;border-radius:3px;background:#f9f9f9"></div>
<div class="abs" style="left:1876px;top:935px;width:28px;height:24px;border:1px solid #b9b9b9;border-radius:3px;background:#f9f9f9"></div>
<svg class="abs" style="left:1849px;top:939px" width="16" height="16" viewBox="0 0 16 16" fill="none"><path d="M8 2L14.5 14H1.5Z" stroke="#e2b04a" stroke-width="1.2" stroke-linejoin="round"/><path d="M8 6.5V10" stroke="#999" stroke-width="1.3"/><circle cx="8" cy="12" r="0.8" fill="#999"/></svg>
<svg class="abs" style="left:1882px;top:939px" width="16" height="16" viewBox="0 0 16 16" fill="none"><circle cx="8" cy="8" r="6.6" stroke="#888" stroke-width="1.1"/><path d="M8 4.5V9" stroke="#e2b04a" stroke-width="1.5"/><circle cx="8" cy="11.3" r="0.9" fill="#e2b04a"/></svg>
<div class="abs" style="left:1905px;top:935px;width:15px;height:82px;background:#b9c5ce"></div>
<div class="abs" style="left:1905px;top:935px;width:15px;height:18px;background:#9bacb6"></div>
<div class="abs" style="left:1905px;top:999px;width:15px;height:18px;background:#9bacb6"></div>
<div class="abs" style="left:1905px;top:980px;width:15px;height:19px;background:#5b6175"></div>
<div class="abs" style="left:1909px;top:942px;width:0;height:0;border-left:4px solid transparent;border-right:4px solid transparent;border-bottom:4.5px solid #6b7280"></div>
<div class="abs" style="left:1909px;top:1007px;width:0;height:0;border-left:4px solid transparent;border-right:4px solid transparent;border-top:4.5px solid #6b7280"></div>
<div class="abs" style="left:1912px;top:951px;width:8px;height:50px;border:1.5px solid #333;border-right:none;border-radius:4px 0 0 4px;background:#cfd6dc"></div>
<div class="abs" style="left:1914px;top:981px;width:4px;height:18px;background:#2fae5c"></div>
<div class="abs" style="left:1907px;top:1019px;width:13px;height:14px;background:#fff;border:1px solid #ccc"></div>
<svg class="abs" style="left:1908px;top:1020px" width="12" height="12" viewBox="0 0 12 12" fill="none"><path d="M2 6.5L5 9.5L10.5 2.5" stroke="#111" stroke-width="1.8"/></svg>
</body></html>
